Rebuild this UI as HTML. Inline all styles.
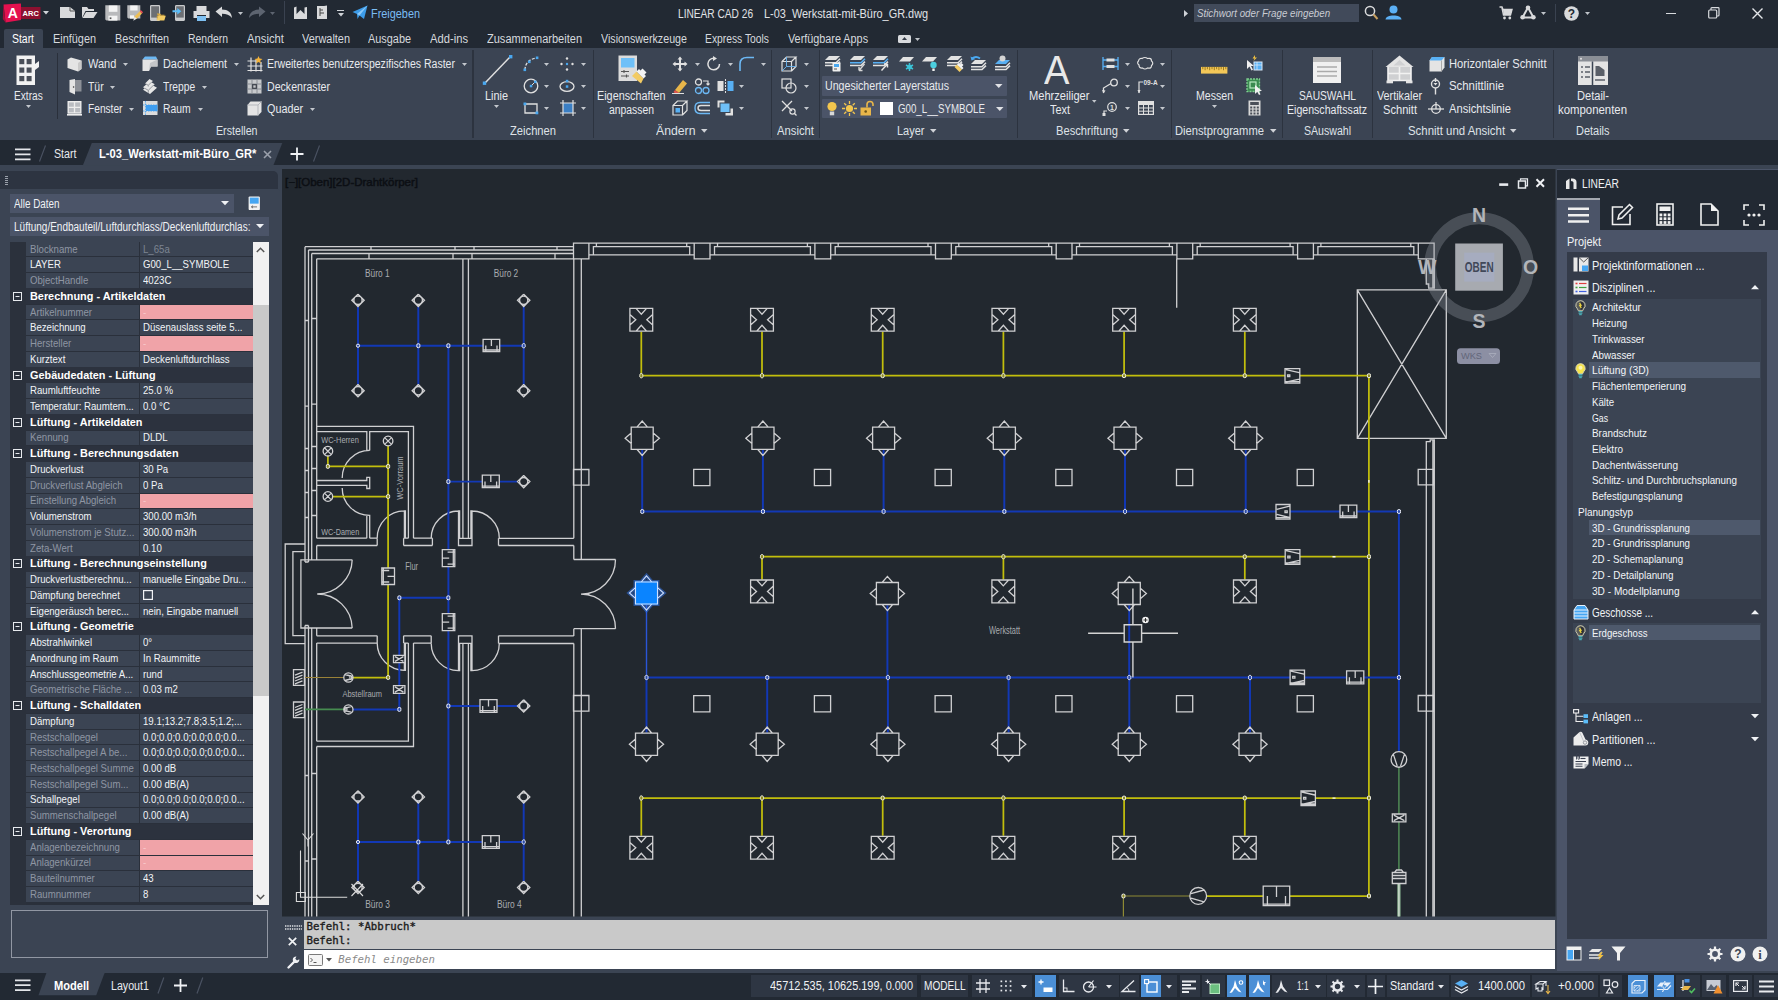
<!DOCTYPE html>
<html lang="de"><head><meta charset="utf-8"><title>LINEAR CAD 26 - L-03_Werkstatt-mit-Büro_GR.dwg</title>
<style>
html,body{margin:0;padding:0;background:#222933;}
body{width:1778px;height:1000px;overflow:hidden;position:relative;font-family:"Liberation Sans",sans-serif;font-size:12px;color:#e6e8ec;}
.a{position:absolute;}
.t{position:absolute;white-space:nowrap;transform-origin:0 50%;line-height:16px;height:16px;}
.b{font-weight:bold;}
svg{position:absolute;overflow:visible;}
</style></head><body>
<div class="a" style="left:0px;top:140px;width:1778px;height:25px;background:#222933;"></div><div class="a" style="left:0px;top:164.5px;width:1778px;height:808px;background:#3b4453;"></div><div class="a" style="left:0px;top:0px;width:1778px;height:26px;background:#222933;"></div><svg style="left:2px;top:3px" width="40" height="20" viewBox="0 0 40 20"><path d="M1.5 1.5L19 0.5V17L3.5 19.5Z" fill="#e3114f"/><path d="M1.5 1.5L3.5 19.5L0.8 16Z" fill="#a50d3a"/><rect x="19" y="4" width="19.5" height="12" fill="#8c1030"/><text x="10.8" y="15" font-family="Liberation Sans,sans-serif" font-weight="bold" font-size="14" fill="#fff" text-anchor="middle">A</text><text x="28.7" y="13.2" font-family="Liberation Sans,sans-serif" font-weight="bold" font-size="7.5" fill="#fff" text-anchor="middle">ARC</text></svg><svg style="left:43px;top:11.25px" width="6" height="3.5"><path d="M0 0H6L3 3.5Z" fill="#d0d3d8"/></svg><svg style="left:60px;top:6px" width="16" height="13" viewBox="0 0 16 13"><path d="M0 1H10L15 5V12H0Z" fill="#d9dadc"/><path d="M10 1V5H15" fill="none" stroke="#555" stroke-width="1"/></svg><svg style="left:82px;top:6px" width="16" height="13" viewBox="0 0 16 13"><path d="M0 1H5L6.5 3H12V5H3.5L0 12Z" fill="#d9dadc"/><path d="M4 6H15.5L11.5 12H0.5Z" fill="#d9dadc"/></svg><svg style="left:104.5px;top:5px" width="16" height="16" viewBox="0 0 16 16"><path d="M0.300 0.300H15.300V15.600H1.500L0.300 14.400Z" fill="#b9babc"/><rect x="3.800" y="0.500" width="8.600" height="6.300" fill="#f4f4f4"/><rect x="3.400" y="10.700" width="9" height="4.900" fill="#f4f4f4"/><rect x="4.700" y="12.400" width="1.700" height="1.700" fill="#555"/></svg><svg style="left:127px;top:5px" width="16" height="16" viewBox="0 0 16 16"><path d="M0.300 0.300H13.300V13.600H1.300L0.300 12.600Z" fill="#b9babc"/><rect x="3.200" y="0.500" width="7.400" height="5" fill="#f4f4f4"/><rect x="3" y="10.300" width="4" height="3.300" fill="#f4f4f4"/><path d="M6.800 14.300L7.600 11.600L12.800 6.200L15 8.400L9.700 13.700Z" fill="#eebf55"/><path d="M12.800 6.200L13.800 5.100L16 7.300L15 8.400Z" fill="#f0505a"/><path d="M6.300 15.800L7.600 11.600L9.700 13.700Z" fill="#e8e8e8"/></svg><svg style="left:149.5px;top:5px" width="16" height="16" viewBox="0 0 16 16"><rect x="0.600" y="0.600" width="9" height="14.800" rx="0.800" fill="#6c6f74" stroke="#c9cacc" stroke-width="1.200"/><rect x="0.600" y="12.600" width="9" height="2.800" fill="#c9cacc"/><path d="M6.800 8.500H10L11 9.800H14.500V10.800H8Z" fill="#d9a93c"/><path d="M8.300 10.800H15.800L14.300 15.500H6.800Z" fill="#f3cb63"/><path d="M6.800 8.500V15.500L8.300 10.800H6.800Z" fill="#d9a93c"/></svg><svg style="left:172px;top:5px" width="14" height="16" viewBox="0 0 14 16"><rect x="3.600" y="0.600" width="8.800" height="14.800" rx="0.800" fill="#6c6f74" stroke="#c9cacc" stroke-width="1.200"/><rect x="3.600" y="12.600" width="8.800" height="2.800" fill="#c9cacc"/><path d="M0.500 5.300H5.300V3L9.300 6.300L5.300 9.600V7.300H0.500Z" fill="#5bbcf8"/></svg><svg style="left:193px;top:4.5px" width="17" height="17" viewBox="0 0 17 17"><rect x="3.5" y="1" width="10" height="5" fill="#d9dadc"/><path d="M0.5 6H16.5V13H13V10H4V13H0.5Z" fill="#d9dadc"/><rect x="4" y="11" width="9" height="5" fill="#7ec0f2"/></svg><svg style="left:215px;top:6px" width="18" height="13" viewBox="0 0 18 13"><path d="M0.5 5.5L7 0.5V3.6C13 3.6 16.5 6.5 17 12C14.5 8.8 11.5 7.8 7 7.8V11Z" fill="#d9dadc"/></svg><svg style="left:237.5px;top:11.5px" width="5" height="3"><path d="M0 0H5L2.5 3Z" fill="#c0c4ca"/></svg><svg style="left:248px;top:6px" width="18" height="13" viewBox="0 0 18 13"><path d="M17.5 5.5L11 0.5V3.6C5 3.6 1.5 6.5 1 12C3.5 8.8 6.5 7.8 11 7.8V11Z" fill="#5d6470"/></svg><svg style="left:270px;top:11.5px" width="5" height="3"><path d="M0 0H5L2.5 3Z" fill="#5d6470"/></svg><div class="a" style="left:283.5px;top:1px;width:1px;height:23px;background:#3a4250;"></div><svg style="left:293px;top:6px" width="15" height="14" viewBox="0 0 15 14"><path d="M1 1.5L3.5 0.5V8L7.5 4L11.5 8V1.5L14 1V13H1Z" fill="#d9dadc"/></svg><svg style="left:316px;top:5px" width="12" height="15" viewBox="0 0 12 15"><path d="M1 1H8L11 0.5V14H1Z" fill="#d9dadc"/><path d="M4 3V11M4 5H7M4 8H8" stroke="#444" stroke-width="1" fill="none"/></svg><div class="a" style="left:337px;top:10px;width:7px;height:1.2px;background:#d0d3d8;"></div><svg style="left:337.5px;top:12.75px" width="6" height="3.5"><path d="M0 0H6L3 3.5Z" fill="#d0d3d8"/></svg><svg style="left:352px;top:5px" width="16" height="15" viewBox="0 0 16 15"><path d="M0.5 7L15.5 0.5L12 14L7.5 10.5L5.5 14L5 9Z" fill="#3c9be8"/><path d="M5 9L15.5 0.5L7.5 10.5" fill="#8cc8f8"/></svg><span class="t" style="left:371.0px;top:6px;font-size:12px;transform:scaleX(0.907);color:#7bbcf3;">Freigeben</span><span class="t" style="left:678.0px;top:6px;font-size:12px;transform:scaleX(0.846);color:#e0e2e6;">LINEAR CAD 26</span><span class="t" style="left:764.0px;top:6px;font-size:12px;transform:scaleX(0.909);color:#e0e2e6;">L-03_Werkstatt-mit-Büro_GR.dwg</span><svg style="left:1184px;top:9.5px" width="4" height="7"><path d="M0 0L4 3.5L0 7Z" fill="#d0d3d8"/></svg><div class="a" style="left:1194px;top:4px;width:165px;height:18px;background:#414a5a;"></div><span class="t" style="left:1197.0px;top:5px;font-size:11.5px;transform:scaleX(0.846);color:#c9ccd3;font-style:italic;">Stichwort oder Frage eingeben</span><svg style="left:1364px;top:5px" width="15" height="15" viewBox="0 0 15 15"><circle cx="6" cy="6" r="4.6" fill="none" stroke="#d9dadc" stroke-width="1.5"/><path d="M9.5 9.5L13.5 14" stroke="#c8a060" stroke-width="2"/></svg><svg style="left:1385px;top:5px" width="17" height="15" viewBox="0 0 17 15"><circle cx="8.5" cy="4.5" r="4" fill="#5cb0f5"/><path d="M0.5 14.5C0.5 9 16.5 9 16.5 14.5Z" fill="#5cb0f5"/></svg><svg style="left:1499px;top:6px" width="14" height="14" viewBox="0 0 14 14"><path d="M0.5 1H3L4 3.5H13L11.5 9H4.5L3 1.8" fill="none" stroke="#d9dadc" stroke-width="1.4"/><path d="M4 3.5H13L11.5 9H4.5Z" fill="#d9dadc"/><circle cx="5.5" cy="12" r="1.4" fill="#d9dadc"/><circle cx="10.8" cy="12" r="1.4" fill="#d9dadc"/></svg><svg style="left:1520px;top:5px" width="16" height="15" viewBox="0 0 16 15"><path d="M8 2.5L2.5 12.5H13.5Z" fill="none" stroke="#d9dadc" stroke-width="2"/><circle cx="8" cy="2.8" r="2.3" fill="#d9dadc"/><circle cx="2.6" cy="12.2" r="2.3" fill="#d9dadc"/><circle cx="13.4" cy="12.2" r="2.3" fill="#d9dadc"/></svg><svg style="left:1540.5px;top:12px" width="5" height="3"><path d="M0 0H5L2.5 3Z" fill="#c0c4ca"/></svg><div class="a" style="left:1555px;top:4px;width:1px;height:18px;background:#3a4250;"></div><svg style="left:1563.5px;top:5.5px" width="15" height="15" viewBox="0 0 15 15"><circle cx="7.5" cy="7.5" r="7.3" fill="#d9dadc"/><text x="7.5" y="11.8" font-family="Liberation Sans,sans-serif" font-weight="bold" font-size="12" fill="#222933" text-anchor="middle">?</text></svg><svg style="left:1585px;top:12px" width="5" height="3"><path d="M0 0H5L2.5 3Z" fill="#c0c4ca"/></svg><div class="a" style="left:1666px;top:12.5px;width:10px;height:1.2px;background:#d8dade;"></div><svg style="left:1708px;top:7px" width="12" height="12" viewBox="0 0 12 12"><rect x="0.7" y="3" width="8" height="8" fill="none" stroke="#d8dade" stroke-width="1.2" rx="1"/><path d="M3 3V1.5Q3 .7 3.8 .7H10.3Q11 .7 11 1.5V8Q11 9 10 9H9" fill="none" stroke="#d8dade" stroke-width="1.2"/></svg><svg style="left:1751.5px;top:7.5px" width="11" height="11" viewBox="0 0 11 11"><path d="M0.5 0.5L10.5 10.5M10.5 0.5L0.5 10.5" stroke="#e4e6ea" stroke-width="1.4"/></svg><div class="a" style="left:4px;top:29px;width:38.5px;height:19px;background:#3b4453;border-radius:2px 2px 0 0;"></div><span class="t" style="left:12.0px;top:31px;font-size:12px;transform:scaleX(0.869);color:#ffffff;">Start</span><span class="t" style="left:53.0px;top:31px;font-size:12px;transform:scaleX(0.908);color:#d6d9de;">Einfügen</span><span class="t" style="left:115.0px;top:31px;font-size:12px;transform:scaleX(0.900);color:#d6d9de;">Beschriften</span><span class="t" style="left:188.0px;top:31px;font-size:12px;transform:scaleX(0.869);color:#d6d9de;">Rendern</span><span class="t" style="left:247.0px;top:31px;font-size:12px;transform:scaleX(0.940);color:#d6d9de;">Ansicht</span><span class="t" style="left:302.0px;top:31px;font-size:12px;transform:scaleX(0.911);color:#d6d9de;">Verwalten</span><span class="t" style="left:368.0px;top:31px;font-size:12px;transform:scaleX(0.908);color:#d6d9de;">Ausgabe</span><span class="t" style="left:430.0px;top:31px;font-size:12px;transform:scaleX(0.934);color:#d6d9de;">Add-ins</span><span class="t" style="left:487.0px;top:31px;font-size:12px;transform:scaleX(0.919);color:#d6d9de;">Zusammenarbeiten</span><span class="t" style="left:601.0px;top:31px;font-size:12px;transform:scaleX(0.891);color:#d6d9de;">Visionswerkzeuge</span><span class="t" style="left:705.0px;top:31px;font-size:12px;transform:scaleX(0.859);color:#d6d9de;">Express Tools</span><span class="t" style="left:788.0px;top:31px;font-size:12px;transform:scaleX(0.902);color:#d6d9de;">Verfügbare Apps</span><div class="a" style="left:898px;top:34.5px;width:13px;height:8px;background:#d8dade;border-radius:1.5px;"></div><svg style="left:902px;top:37px" width="5" height="3"><path d="M0 3H5L2.5 0Z" fill="#333a46"/></svg><svg style="left:914.5px;top:38px" width="5" height="3"><path d="M0 0H5L2.5 3Z" fill="#c0c4ca"/></svg><div class="a" style="left:0px;top:48px;width:1778px;height:92px;background:#3b4453;"></div><svg style="left:16px;top:55px" width="24" height="31" viewBox="0 0 24 31"><path d="M0.5 0.5H19V30H0.5Z" fill="#f2f2f2"/><path d="M19 9L23 6V12L19 15Z" fill="#f2f2f2"/><rect x="3.3" y="4" width="5" height="5.2" fill="#4a4f58"/><rect x="10.6" y="4" width="5" height="5.2" fill="#4a4f58"/><rect x="3.3" y="12.5" width="5" height="5.2" fill="#4a4f58"/><rect x="10.6" y="12.5" width="5" height="5.2" fill="#4a4f58"/><rect x="3.3" y="21" width="5" height="5.2" fill="#4a4f58"/><rect x="10.6" y="21" width="5" height="5.2" fill="#4a4f58"/></svg><span class="t" style="left:14.2px;top:88px;font-size:12px;transform:scaleX(0.844);color:#e8eaee;">Extras</span><svg style="left:25.7px;top:105px" width="5" height="3"><path d="M0 0H5L2.5 3Z" fill="#c4c8ce"/></svg><div class="a" style="left:57.3px;top:53px;width:1.2px;height:66px;background:#2a303b;"></div><svg style="left:67px;top:56.5px" width="15" height="15" viewBox="0 0 15 15"><path d="M0.5 2.5L4 0.5L14.5 3.5V12L11 14.5L0.5 11Z" fill="#e4e4e4"/><path d="M11 6V14.5L14.5 12V3.5Z" fill="#c9c9c9"/></svg><span class="t" style="left:87.5px;top:56px;font-size:12px;transform:scaleX(0.916);color:#e8eaee;">Wand</span><svg style="left:123px;top:62.8px" width="5" height="3"><path d="M0 0H5L2.5 3Z" fill="#c4c8ce"/></svg><svg style="left:68.5px;top:78.5px" width="13" height="16" viewBox="0 0 13 16"><path d="M0.5 1L6 0V15.5L0.5 13Z" fill="#e4e4e4"/><rect x="6" y="1" width="6.5" height="11.5" fill="#8c9097"/><circle cx="4.6" cy="8" r="0.8" fill="#333"/></svg><span class="t" style="left:87.7px;top:79px;font-size:12px;transform:scaleX(0.867);color:#e8eaee;">Tür</span><svg style="left:109.8px;top:85.5px" width="5" height="3"><path d="M0 0H5L2.5 3Z" fill="#c4c8ce"/></svg><svg style="left:67px;top:100.5px" width="15" height="15" viewBox="0 0 15 15"><rect x="1.2" y="0.7" width="12.6" height="11.3" fill="#b9bcc1" stroke="#ededed" stroke-width="1.4"/><path d="M7.5 0.7V12M1.2 6.3H13.8" stroke="#ededed" stroke-width="1.3"/><rect x="0" y="13" width="15" height="1.6" fill="#ededed"/></svg><span class="t" style="left:87.7px;top:101px;font-size:12px;transform:scaleX(0.848);color:#e8eaee;">Fenster</span><svg style="left:129.4px;top:107.6px" width="5" height="3"><path d="M0 0H5L2.5 3Z" fill="#c4c8ce"/></svg><svg style="left:142px;top:56px" width="16" height="16" viewBox="0 0 16 16"><path d="M0.5 3.5L3 0.5H14L15.5 3.5Z" fill="#6cb8f4"/><path d="M0.5 3.5H15.5V10.5H9L7 15H0.5Z" fill="#e4e4e4"/><path d="M8 7L15.5 3.5V10.5H9L7 15Z" fill="#c4c6c9"/></svg><span class="t" style="left:162.7px;top:56px;font-size:12px;transform:scaleX(0.907);color:#e8eaee;">Dachelement</span><svg style="left:234px;top:62.8px" width="5" height="3"><path d="M0 0H5L2.5 3Z" fill="#c4c8ce"/></svg><svg style="left:142px;top:78px" width="16" height="17" viewBox="0 0 16 17"><path d="M7.500 1L11 3L9.300 4.300L12.800 6.300L11.100 7.600L15 9.800L8 16L1 11.800L2.800 10.300L1 9.200L4.500 6.300L3 5.400Z" fill="#e6e6e6"/><path d="M3 5.400L6.300 7.300L9.300 4.300M2.800 10.300L6.300 12.300L11.100 7.600M6.300 7.300V8.500M6.300 12.300V14.800" stroke="#8a8e95" stroke-width="0.900" fill="none"/></svg><span class="t" style="left:162.7px;top:79px;font-size:12px;transform:scaleX(0.854);color:#e8eaee;">Treppe</span><svg style="left:201.7px;top:85.5px" width="5" height="3"><path d="M0 0H5L2.5 3Z" fill="#c4c8ce"/></svg><svg style="left:142.5px;top:101px" width="14.5" height="14" viewBox="0 0 14.5 14"><rect x="0" y="0" width="14.5" height="14" fill="#dcdcdc"/><rect x="3" y="4" width="11.5" height="6" fill="#3f9ef0"/><path d="M2.5 0V14M0 4H14.5M0 10H14.5" stroke="#3f9ef0" stroke-width="0.8" stroke-dasharray="1.5 1"/></svg><span class="t" style="left:162.7px;top:101px;font-size:12px;transform:scaleX(0.862);color:#e8eaee;">Raum</span><svg style="left:198px;top:107.6px" width="5" height="3"><path d="M0 0H5L2.5 3Z" fill="#c4c8ce"/></svg><svg style="left:246.5px;top:56px" width="16" height="16" viewBox="0 0 16 16"><path d="M4 1.5V15.5M9 4V15.5M14 6V15.5M0.5 5H10M0.5 10H15.5M0.5 14.5H15.5" stroke="#e4e4e4" stroke-width="1.2" fill="none"/><path d="M11.5 0L12.6 2.6L15.5 3L13.2 4.8L14 7.6L11.5 6L9 7.6L9.8 4.8L7.5 3L10.4 2.6Z" fill="#f2b33c"/></svg><span class="t" style="left:267.0px;top:56px;font-size:12px;transform:scaleX(0.878);color:#e8eaee;">Erweitertes benutzerspezifisches Raster</span><svg style="left:462px;top:62.8px" width="5" height="3"><path d="M0 0H5L2.5 3Z" fill="#c4c8ce"/></svg><svg style="left:247px;top:79px" width="15" height="15" viewBox="0 0 15 15"><rect x="0.5" y="0.5" width="14" height="14" fill="#c7c9cc"/><path d="M5 0.5V14.5M10 0.5V14.5M0.5 5H14.5M0.5 10H14.5" stroke="#8a8e95" stroke-width="1"/><rect x="5.7" y="5.7" width="3.6" height="3.6" fill="none" stroke="#3a3f48" stroke-width="1.2"/></svg><span class="t" style="left:267.0px;top:79px;font-size:12px;transform:scaleX(0.883);color:#e8eaee;">Deckenraster</span><svg style="left:247px;top:101px" width="15" height="15" viewBox="0 0 15 15"><path d="M0.5 4L3.5 0.5H14.5V11L11 14.5H0.5Z" fill="#e4e4e4"/><path d="M11 4H0.5M11 4V14.5M11 4L14.5 0.5" stroke="#b4b7bc" stroke-width="1" fill="none"/></svg><span class="t" style="left:267.0px;top:101px;font-size:12px;transform:scaleX(0.900);color:#e8eaee;">Quader</span><svg style="left:310px;top:107.6px" width="5" height="3"><path d="M0 0H5L2.5 3Z" fill="#c4c8ce"/></svg><span class="t" style="left:216.2px;top:123px;font-size:12px;transform:scaleX(0.889);color:#dfe2e7;">Erstellen</span><div class="a" style="left:472px;top:50px;width:1.5px;height:88px;background:#2c333f;"></div><svg style="left:482px;top:54px" width="32" height="32" viewBox="0 0 32 32"><path d="M3 29L28 3" stroke="#e0e0e0" stroke-width="1.5"/><rect x="0.8" y="27.5" width="3.4" height="3.4" fill="#4aa8f0"/><rect x="27" y="1" width="3.4" height="3.4" fill="#4aa8f0"/></svg><span class="t" style="left:485.2px;top:88px;font-size:12px;transform:scaleX(0.907);color:#e8eaee;">Linie</span><svg style="left:494px;top:105px" width="5" height="3"><path d="M0 0H5L2.5 3Z" fill="#c4c8ce"/></svg><svg style="left:523px;top:56px" width="16" height="15" viewBox="0 0 16 15"><path d="M2 14C2 7 7 2.5 14 2" fill="none" stroke="#e0e0e0" stroke-width="1.3" stroke-dasharray="3 1.5"/><rect x="0.5" y="12.5" width="2.6" height="2.6" fill="#4aa8f0"/><rect x="12.8" y="0.5" width="2.6" height="2.6" fill="#4aa8f0"/><rect x="5" y="4.5" width="2.6" height="2.6" fill="#4aa8f0"/></svg><svg style="left:544.3px;top:62.8px" width="5" height="3"><path d="M0 0H5L2.5 3Z" fill="#c4c8ce"/></svg><svg style="left:560px;top:57px" width="14" height="14" viewBox="0 0 14 14"><circle cx="7" cy="1.5" r="1.2" fill="#e0e0e0"/><circle cx="7" cy="12.5" r="1.2" fill="#e0e0e0"/><circle cx="1.5" cy="7" r="1.2" fill="#e0e0e0"/><circle cx="12.5" cy="7" r="1.2" fill="#e0e0e0"/><circle cx="7" cy="7" r="1.2" fill="#4aa8f0"/></svg><svg style="left:581.3px;top:62.8px" width="5" height="3"><path d="M0 0H5L2.5 3Z" fill="#c4c8ce"/></svg><svg style="left:522.5px;top:78px" width="16" height="16" viewBox="0 0 16 16"><circle cx="8" cy="8" r="6.8" fill="none" stroke="#e0e0e0" stroke-width="1.3"/><path d="M8 8L12 4" stroke="#e0e0e0" stroke-width="1"/><rect x="6.8" y="6.8" width="2.5" height="2.5" fill="#4aa8f0"/><rect x="11" y="2.6" width="2.5" height="2.5" fill="#4aa8f0"/></svg><svg style="left:544.3px;top:85px" width="5" height="3"><path d="M0 0H5L2.5 3Z" fill="#c4c8ce"/></svg><svg style="left:559px;top:79px" width="16" height="14" viewBox="0 0 16 14"><ellipse cx="8" cy="7.5" rx="7" ry="4.8" fill="none" stroke="#e0e0e0" stroke-width="1.3"/><rect x="6.8" y="6.3" width="2.5" height="2.5" fill="#4aa8f0"/><rect x="6.8" y="0.8" width="2.5" height="2.5" fill="#4aa8f0"/></svg><svg style="left:581.3px;top:85px" width="5" height="3"><path d="M0 0H5L2.5 3Z" fill="#c4c8ce"/></svg><svg style="left:523px;top:101px" width="16" height="14" viewBox="0 0 16 14"><path d="M2 3H14V12H2Z" fill="none" stroke="#e0e0e0" stroke-width="1.3"/><rect x="0.5" y="1.5" width="2.8" height="2.8" fill="#4aa8f0"/><rect x="12.5" y="10.5" width="2.8" height="2.8" fill="#4aa8f0"/></svg><svg style="left:544.3px;top:107.3px" width="5" height="3"><path d="M0 0H5L2.5 3Z" fill="#c4c8ce"/></svg><svg style="left:559.5px;top:100px" width="16" height="16" viewBox="0 0 16 16"><rect x="3" y="3" width="10" height="10" fill="#3b7fc4"/><path d="M3 0V16M13 0V16M0 3H16M0 13H16" stroke="#e0e0e0" stroke-width="1.2"/></svg><svg style="left:581.3px;top:107.3px" width="5" height="3"><path d="M0 0H5L2.5 3Z" fill="#c4c8ce"/></svg><span class="t" style="left:510.0px;top:123px;font-size:12px;transform:scaleX(0.932);color:#dfe2e7;">Zeichnen</span><div class="a" style="left:592.5px;top:50px;width:1.5px;height:88px;background:#2c333f;"></div><svg style="left:617px;top:55px" width="32" height="32" viewBox="0 0 32 32"><rect x="1.500" y="0.500" width="18.500" height="25.500" fill="#dcdcdc"/><rect x="4" y="3" width="13.500" height="9.500" fill="#6ec0f8"/><path d="M4 16.500H12M4 21H12M7 15V18M9.500 19.500V22.500" stroke="#555" stroke-width="1.100"/><path d="M15 21L19.500 16.500L26.500 23.500L24 28.500Z" fill="#f3cb63"/><path d="M19.500 16.500L22 14L23.500 15.500L25.500 13.500L29.500 17.500L27.500 19.500L29 21L26.500 23.500Z" fill="#f4f4f4"/></svg><span class="t" style="left:597.2px;top:88px;font-size:12px;transform:scaleX(0.901);color:#e8eaee;">Eigenschaften</span><span class="t" style="left:609.0px;top:102px;font-size:12px;transform:scaleX(0.865);color:#e8eaee;">anpassen</span><svg style="left:672px;top:56px" width="16" height="16" viewBox="0 0 16 16"><path d="M8 0.5L10.5 3.5H9V7H12.5V5.5L15.5 8L12.5 10.5V9H9V12.5H10.5L8 15.5L5.5 12.5H7V9H3.5V10.5L0.5 8L3.5 5.5V7H7V3.5H5.5Z" fill="#e0e0e0"/></svg><svg style="left:694.5px;top:62.8px" width="5" height="3"><path d="M0 0H5L2.5 3Z" fill="#c4c8ce"/></svg><svg style="left:706px;top:56px" width="16" height="16" viewBox="0 0 16 16"><path d="M13.5 8A5.8 5.8 0 1 1 8 2.2" fill="none" stroke="#e0e0e0" stroke-width="1.5"/><path d="M7 0L11 2.5L7 5Z" fill="#e0e0e0"/></svg><svg style="left:728px;top:62.8px" width="5" height="3"><path d="M0 0H5L2.5 3Z" fill="#c4c8ce"/></svg><svg style="left:739px;top:56px" width="16" height="16" viewBox="0 0 16 16"><path d="M1 15V8Q1 1.5 8 1.5H15" fill="none" stroke="#6cb8f4" stroke-width="1.6"/></svg><svg style="left:761px;top:62.8px" width="5" height="3"><path d="M0 0H5L2.5 3Z" fill="#c4c8ce"/></svg><svg style="left:672px;top:78px" width="17" height="16" viewBox="0 0 17 16"><path d="M3 12L11 2L15 5.5L7 15Z" fill="#e8b64a"/><path d="M3 12L7 15L4 16L1.5 14Z" fill="#e2574c"/><path d="M0 15.5H12" stroke="#e0e0e0" stroke-width="1"/></svg><svg style="left:694px;top:78px" width="17" height="17" viewBox="0 0 17 17"><circle cx="4.5" cy="4" r="3" fill="none" stroke="#e0e0e0" stroke-width="1.3"/><circle cx="4.5" cy="12.5" r="3" fill="none" stroke="#6cb8f4" stroke-width="1.3"/><circle cx="12" cy="12.5" r="3" fill="none" stroke="#6cb8f4" stroke-width="1.3"/><path d="M9 3H14V7M12.5 5.5L14 7L15.5 5.5" fill="none" stroke="#e0e0e0" stroke-width="1.2"/></svg><svg style="left:717px;top:79px" width="17" height="14" viewBox="0 0 17 14"><rect x="0.5" y="2" width="6" height="10" fill="#e0e0e0"/><path d="M8.5 0V14" stroke="#e0e0e0" stroke-width="1" stroke-dasharray="2 1"/><rect x="10.5" y="2" width="6" height="10" fill="#58b0f4"/></svg><svg style="left:739px;top:85px" width="5" height="3"><path d="M0 0H5L2.5 3Z" fill="#c4c8ce"/></svg><svg style="left:672px;top:100px" width="17" height="16" viewBox="0 0 17 16"><path d="M1 5.5H10.5V15H1ZM1 5.5L5.5 1H15L10.5 5.5M15 1V10.5L10.5 15" fill="none" stroke="#e0e0e0" stroke-width="1.2"/><rect x="3.5" y="8" width="4.5" height="4.5" fill="#58b0f4"/></svg><svg style="left:694px;top:101px" width="17" height="14" viewBox="0 0 17 14"><path d="M16 1.5H6Q1 1.5 1 7Q1 12.5 6 12.5H16" fill="none" stroke="#6cb8f4" stroke-width="1.4"/><path d="M16 4.5H7Q4 4.5 4 7Q4 9.5 7 9.5H16" fill="none" stroke="#e0e0e0" stroke-width="1.4"/></svg><svg style="left:717px;top:100px" width="17" height="16" viewBox="0 0 17 16"><rect x="0.5" y="0.5" width="7" height="7" fill="#e0e0e0"/><rect x="8.5" y="8.5" width="7.5" height="7" fill="#e0e0e0"/><rect x="3" y="3" width="10" height="9.5" fill="#6ec0f8" stroke="#3b4453" stroke-width="1"/></svg><svg style="left:739px;top:107.3px" width="5" height="3"><path d="M0 0H5L2.5 3Z" fill="#c4c8ce"/></svg><span class="t" style="left:655.8px;top:123px;font-size:12px;transform:scaleX(1.021);color:#dfe2e7;">Ändern</span><svg style="left:701px;top:128.6px" width="6.5" height="3.8"><path d="M0 0H6.5L3.25 3.8Z" fill="#d0d3d8"/></svg><div class="a" style="left:770.5px;top:50px;width:1.5px;height:88px;background:#2c333f;"></div><svg style="left:781px;top:56px" width="16" height="16" viewBox="0 0 16 16"><path d="M1 5.5H10.5V15H1ZM1 5.5L5.5 1H15L10.5 5.5M15 1V10.5L10.5 15" fill="none" stroke="#e0e0e0" stroke-width="1.2"/><path d="M5.5 1V10.5H15M5.5 10.5L1 15" stroke="#6cb8f4" stroke-width="0.9" fill="none"/></svg><svg style="left:803.5px;top:62.8px" width="5" height="3"><path d="M0 0H5L2.5 3Z" fill="#c4c8ce"/></svg><svg style="left:781px;top:78px" width="16" height="16" viewBox="0 0 16 16"><rect x="1" y="1" width="9" height="9" fill="none" stroke="#e0e0e0" stroke-width="1.2"/><circle cx="10" cy="10" r="5" fill="none" stroke="#e0e0e0" stroke-width="1.2"/></svg><svg style="left:803.5px;top:85px" width="5" height="3"><path d="M0 0H5L2.5 3Z" fill="#c4c8ce"/></svg><svg style="left:781px;top:100px" width="16" height="16" viewBox="0 0 16 16"><path d="M1 1L11 11M11 1L1 11" stroke="#e0e0e0" stroke-width="1.3"/><circle cx="11.5" cy="11.5" r="2.6" fill="none" stroke="#e0e0e0" stroke-width="1.2"/><path d="M13.5 13.5L15.5 15.5" stroke="#e0e0e0" stroke-width="1.3"/></svg><svg style="left:803.5px;top:107.3px" width="5" height="3"><path d="M0 0H5L2.5 3Z" fill="#c4c8ce"/></svg><span class="t" style="left:776.8px;top:123px;font-size:12px;transform:scaleX(0.940);color:#dfe2e7;">Ansicht</span><div class="a" style="left:818.5px;top:50px;width:1.5px;height:88px;background:#2c333f;"></div><svg style="left:824px;top:55px" width="18" height="18" viewBox="0 0 18 18"><path d="M5 1 H16 L12 5 H1 Z" fill="#e2e2e2"/><path d="M1 7.8 H12 L16 3.8" fill="none" stroke="#e2e2e2" stroke-width="1.500"/><path d="M1 10.6 H12 L16 6.6" fill="none" stroke="#e2e2e2" stroke-width="1.500"/><rect x="8.500" y="7.500" width="8" height="9" rx="0.800" fill="#f0f0f0"/><rect x="10" y="9" width="5" height="3" fill="#4aa8f0"/><path d="M10 14H13" stroke="#555" stroke-width="1"/></svg><svg style="left:849px;top:55px" width="18" height="18" viewBox="0 0 18 18"><path d="M5 1 H16 L12 5 H1 Z" fill="#e2e2e2"/><path d="M1 7.8 H12 L16 3.8" fill="none" stroke="#58b0f4" stroke-width="1.500"/><path d="M1 10.6 H12 L16 6.6" fill="none" stroke="#e2e2e2" stroke-width="1.500"/><path d="M15.500 9L10 15.500M10 15.500V12M10 15.500H13.500" stroke="#d8d8d8" stroke-width="1.400" fill="none"/></svg><svg style="left:872px;top:55px" width="18" height="18" viewBox="0 0 18 18"><path d="M5 1 H16 L12 5 H1 Z" fill="#e2e2e2"/><path d="M1 7.8 H12 L16 3.8" fill="none" stroke="#58b0f4" stroke-width="1.500"/><path d="M1 10.6 H12 L16 6.6" fill="none" stroke="#e2e2e2" stroke-width="1.500"/><path d="M9.500 15.500L15.500 9M15.500 9V12.500M15.500 9H12" stroke="#e8e8e8" stroke-width="1.400" fill="none"/></svg><svg style="left:898px;top:55px" width="18" height="18" viewBox="0 0 18 18"><path d="M5 2H16L12 6.500H1Z" fill="#e2e2e2"/><path d="M11.500 8V16M8 10L15 14M15 10L8 14" stroke="#3cc4d8" stroke-width="1.500"/><circle cx="11.500" cy="12" r="2" fill="none" stroke="#3cc4d8" stroke-width="1"/></svg><svg style="left:922px;top:55px" width="18" height="18" viewBox="0 0 18 18"><path d="M4 2H15L11 6.500H0Z" fill="#e2e2e2"/><circle cx="11.500" cy="10" r="3.200" fill="#4ccfe0"/><rect x="10.300" y="13.500" width="2.400" height="2.500" fill="#f0f0f0"/></svg><svg style="left:946px;top:55px" width="18" height="18" viewBox="0 0 18 18"><path d="M5 1 H16 L12 5 H1 Z" fill="#e2e2e2"/><path d="M1 7.8 H12 L16 3.8" fill="none" stroke="#e2e2e2" stroke-width="1.500"/><path d="M1 10.6 H12 L16 6.6" fill="none" stroke="#e2e2e2" stroke-width="1.500"/><path d="M8.500 12L11 9.500L16 14.500L13.500 17Z" fill="#f3cb63"/><path d="M11 9.500L12.500 8L14 9.500L15.500 8L17.500 10L16 11.500L17.500 13L16 14.500Z" fill="#f4f4f4"/></svg><svg style="left:970px;top:55px" width="18" height="18" viewBox="0 0 18 18"><path d="M5 5 H16 L12 9 H1 Z" fill="#e2e2e2"/><path d="M1 11.8 H12 L16 7.8" fill="none" stroke="#e2e2e2" stroke-width="1.500"/><path d="M1 14.6 H12 L16 10.6" fill="none" stroke="#e2e2e2" stroke-width="1.500"/><path d="M2 3.500Q6 0.500 10 3.500" fill="none" stroke="#4aa8f0" stroke-width="1.800"/><path d="M0.500 1.500L1.500 5.500L5.500 4Z" fill="#4aa8f0"/></svg><svg style="left:994px;top:55px" width="18" height="18" viewBox="0 0 18 18"><path d="M5 5 H16 L12 9 H1 Z" fill="#58b0f4"/><path d="M1 11.8 H12 L16 7.8" fill="none" stroke="#e2e2e2" stroke-width="1.500"/><path d="M1 14.6 H12 L16 10.6" fill="none" stroke="#e2e2e2" stroke-width="1.500"/><circle cx="8.500" cy="3.500" r="3" fill="#d4d4d4"/></svg><div class="a" style="left:822px;top:76px;width:185px;height:19.5px;background:#4b5468;border-radius:1px;"></div><span class="t" style="left:825.0px;top:78px;font-size:12px;transform:scaleX(0.885);color:#e8eaee;">Ungesicherter Layerstatus</span><svg style="left:995.25px;top:83.8px" width="7.5" height="4"><path d="M0 0H7.5L3.75 4Z" fill="#e0e2e6"/></svg><div class="a" style="left:822px;top:98.5px;width:185px;height:19.5px;background:#4b5468;border-radius:1px;"></div><svg style="left:826px;top:100.5px" width="12" height="16" viewBox="0 0 12 16"><circle cx="6" cy="5.5" r="4.6" fill="#f3c64e"/><rect x="3.8" y="10.5" width="4.4" height="3.8" fill="#d8d8d8"/></svg><svg style="left:842px;top:101px" width="15" height="15" viewBox="0 0 15 15"><circle cx="7.5" cy="7.5" r="3.6" fill="#f3c64e"/><path d="M7.5 0V3M7.5 12V15M0 7.5H3M12 7.5H15M2.2 2.2L4.3 4.3M10.7 10.7L12.8 12.8M2.2 12.8L4.3 10.7M10.7 4.3L12.8 2.2" stroke="#f3c64e" stroke-width="1.3"/></svg><svg style="left:860px;top:100px" width="14" height="16" viewBox="0 0 14 16"><rect x="0.5" y="7.5" width="10.5" height="8" fill="#e8b64a"/><path d="M7 7.5V4.5Q7 1.5 10 1.5Q13 1.5 13 4.5V6" fill="none" stroke="#e8b64a" stroke-width="1.6"/><circle cx="5.7" cy="11.5" r="1.3" fill="#6b5318"/></svg><div class="a" style="left:879.5px;top:101.5px;width:13px;height:13px;background:#ffffff;"></div><span class="t" style="left:897.5px;top:101px;font-size:12px;transform:scaleX(0.810);color:#e8eaee;">G00_L__SYMBOLE</span><svg style="left:996.25px;top:106.5px" width="7.5" height="4"><path d="M0 0H7.5L3.75 4Z" fill="#e0e2e6"/></svg><span class="t" style="left:896.8px;top:123px;font-size:12px;transform:scaleX(0.916);color:#dfe2e7;">Layer</span><svg style="left:930px;top:128.6px" width="6.5" height="3.8"><path d="M0 0H6.5L3.25 3.8Z" fill="#d0d3d8"/></svg><div class="a" style="left:1016.5px;top:50px;width:1.5px;height:88px;background:#2c333f;"></div><span class="t" style="left:1044px;top:48px;height:44px;line-height:44px;font-size:41px;color:#e8e8e8;transform:scaleX(.93)">A</span><span class="t" style="left:1029.2px;top:88px;font-size:12px;transform:scaleX(0.925);color:#e8eaee;">Mehrzeiliger</span><span class="t" style="left:1049.5px;top:102px;font-size:12px;transform:scaleX(0.909);color:#e8eaee;">Text</span><svg style="left:1091.75px;top:100.1px" width="4.5" height="2.8"><path d="M0 0H4.5L2.25 2.8Z" fill="#c4c8ce"/></svg><svg style="left:1102px;top:56px" width="17" height="15" viewBox="0 0 17 15"><path d="M1 1V14M16 1V14M1 4H16M1 10.5H16" stroke="#58b0f4" stroke-width="1.3" fill="none"/><path d="M4.5 2.5H12.5V5.5H4.5ZM4.500 9H12.5V12H4.5Z" fill="#e0e0e0"/></svg><svg style="left:1125px;top:62.8px" width="5" height="3"><path d="M0 0H5L2.5 3Z" fill="#c4c8ce"/></svg><svg style="left:1137px;top:57px" width="17" height="13" viewBox="0 0 17 13"><path d="M5 1.5Q2 1 1.5 4Q-0.500 6 2 8Q2 11.500 5.500 11Q8 13 10.500 11Q14.500 12 14.500 8.500Q17 6 14.500 4Q14.500 0.500 10.500 1.500Q8 -0.500 5 1.500Z" fill="none" stroke="#e0e0e0" stroke-width="1.2"/></svg><svg style="left:1160px;top:62.8px" width="5" height="3"><path d="M0 0H5L2.5 3Z" fill="#c4c8ce"/></svg><svg style="left:1102px;top:78px" width="17" height="16" viewBox="0 0 17 16"><path d="M1.5 15V10L9 5.500" fill="none" stroke="#e0e0e0" stroke-width="1.3"/><path d="M0 12L1.5 15.5L3.5 12.500Z" fill="#e0e0e0"/><circle cx="12" cy="4.500" r="3.3" fill="none" stroke="#e0e0e0" stroke-width="1.3"/></svg><svg style="left:1125px;top:85px" width="5" height="3"><path d="M0 0H5L2.5 3Z" fill="#c4c8ce"/></svg><svg style="left:1137px;top:78px" width="17" height="16" viewBox="0 0 17 16"><path d="M2 15V4H6" fill="none" stroke="#e0e0e0" stroke-width="1.2"/><path d="M0.5 12L2 15.5L3.5 12Z" fill="#e0e0e0"/><text x="6.500" y="7" font-family="Liberation Sans,sans-serif" font-size="6.500" font-weight="bold" fill="#e0e0e0">09-A</text></svg><svg style="left:1160px;top:85px" width="5" height="3"><path d="M0 0H5L2.5 3Z" fill="#c4c8ce"/></svg><svg style="left:1102px;top:100px" width="17" height="16" viewBox="0 0 17 16"><path d="M2 15V11H5" fill="none" stroke="#e0e0e0" stroke-width="1.2"/><circle cx="10" cy="7" r="4.300" fill="none" stroke="#e0e0e0" stroke-width="1.2"/><text x="10" y="9.500" font-family="Liberation Sans,sans-serif" font-size="7" font-weight="bold" fill="#e0e0e0" text-anchor="middle">1</text><rect x="0.5" y="13" width="3" height="3" fill="#e0e0e0"/></svg><svg style="left:1125px;top:107.3px" width="5" height="3"><path d="M0 0H5L2.5 3Z" fill="#c4c8ce"/></svg><svg style="left:1137.5px;top:101px" width="16" height="14" viewBox="0 0 16 14"><rect x="0.600" y="0.600" width="14.800" height="12.800" fill="none" stroke="#e0e0e0" stroke-width="1.200"/><rect x="0.600" y="0.600" width="14.800" height="3.400" fill="#e0e0e0"/><path d="M0.600 7H15.400M0.600 10.200H15.400M5.500 4V13.400M10.500 4V13.400" stroke="#e0e0e0" stroke-width="1"/></svg><svg style="left:1160px;top:107.3px" width="5" height="3"><path d="M0 0H5L2.5 3Z" fill="#c4c8ce"/></svg><span class="t" style="left:1055.5px;top:123px;font-size:12px;transform:scaleX(0.930);color:#dfe2e7;">Beschriftung</span><svg style="left:1123.25px;top:128.6px" width="6.5" height="3.8"><path d="M0 0H6.5L3.25 3.8Z" fill="#d0d3d8"/></svg><div class="a" style="left:1170.5px;top:50px;width:1.5px;height:88px;background:#2c333f;"></div><svg style="left:1201px;top:66px" width="27" height="9" viewBox="0 0 27 9"><rect x="0" y="0.900" width="26.400" height="6.700" fill="#f4c858"/><path d="M1.8 0.900V3.2M4.1 0.900V4.2M6.4 0.900V3.2M8.7 0.900V4.2M11 0.900V3.2M13.3 0.900V4.2M15.6 0.900V3.2M17.9 0.900V4.2M20.2 0.900V3.2M22.5 0.900V4.2M24.8 0.900V3.2" stroke="#8a6a10" stroke-width="0.800"/></svg><span class="t" style="left:1195.5px;top:88px;font-size:12px;transform:scaleX(0.881);color:#e8eaee;">Messen</span><svg style="left:1211.5px;top:105px" width="5" height="3"><path d="M0 0H5L2.5 3Z" fill="#c4c8ce"/></svg><svg style="left:1246px;top:55px" width="17" height="17" viewBox="0 0 17 17"><path d="M1 5L1 14L3.500 11.500L5.500 15.500L7 14.800L5 11L8 11Z" fill="#f0f0f0"/><rect x="8" y="7" width="8" height="8" fill="#58b0f4" stroke="#d8e8f8" stroke-width="1"/><path d="M8 10H16M11 7V15" stroke="#d8e8f8" stroke-width="0.8"/><path d="M9 0L6.500 3.500H8.500L7.500 6L11 2.500H9Z" fill="#f0c040"/></svg><svg style="left:1246px;top:77.5px" width="17" height="17" viewBox="0 0 17 17"><rect x="1" y="1" width="12.500" height="12.500" fill="#3a8a50" stroke="#7ed090" stroke-width="1.300" stroke-dasharray="2 1"/><rect x="4" y="4" width="6" height="6" fill="none" stroke="#b8e8c0" stroke-width="1.200"/><path d="M9 7V16L11.300 13.800L13 17L14.500 16.300L12.800 13H16Z" fill="#f0f0f0"/></svg><svg style="left:1248px;top:100px" width="13" height="16" viewBox="0 0 13 16"><rect x="0.500" y="0.500" width="12" height="15" fill="#d8d8d8"/><rect x="2.200" y="2" width="8.600" height="3" fill="#4a4f58"/><rect x="2.2" y="6.5" width="2" height="2" fill="#4a4f58"/><rect x="5.5" y="6.5" width="2" height="2" fill="#4a4f58"/><rect x="8.8" y="6.5" width="2" height="2" fill="#4a4f58"/><rect x="2.2" y="9.5" width="2" height="2" fill="#4a4f58"/><rect x="5.5" y="9.5" width="2" height="2" fill="#4a4f58"/><rect x="8.8" y="9.5" width="2" height="2" fill="#4a4f58"/><rect x="2.2" y="12.5" width="2" height="2" fill="#4a4f58"/><rect x="5.5" y="12.5" width="2" height="2" fill="#4a4f58"/><rect x="8.8" y="12.5" width="2" height="2" fill="#4a4f58"/></svg><span class="t" style="left:1175.0px;top:123px;font-size:12px;transform:scaleX(0.933);color:#dfe2e7;">Dienstprogramme</span><svg style="left:1269.75px;top:128.6px" width="6.5" height="3.8"><path d="M0 0H6.5L3.25 3.8Z" fill="#d0d3d8"/></svg><div class="a" style="left:1281.5px;top:50px;width:1.5px;height:88px;background:#2c333f;"></div><svg style="left:1313px;top:57px" width="28" height="26" viewBox="0 0 28 26"><rect x="0" y="0" width="28" height="26" fill="#f0f0f0"/><rect x="0" y="0" width="28" height="5" fill="#bcbcbc"/><path d="M4 10H24M4 14.500H24M4 19H24" stroke="#aaa" stroke-width="1.600"/></svg><span class="t" style="left:1298.5px;top:88px;font-size:12px;transform:scaleX(0.852);color:#e8eaee;">SAUSWAHL</span><span class="t" style="left:1287.0px;top:102px;font-size:12px;transform:scaleX(0.882);color:#e8eaee;">Eigenschaftssatz</span><span class="t" style="left:1303.5px;top:123px;font-size:12px;transform:scaleX(0.881);color:#dfe2e7;">SAuswahl</span><div class="a" style="left:1371.5px;top:50px;width:1.5px;height:88px;background:#2c333f;"></div><svg style="left:1385px;top:55px" width="29" height="29" viewBox="0 0 29 29"><path d="M14.500 0.500L28.500 12H0.500Z" fill="#e4e4e4"/><rect x="3" y="12" width="23" height="13.500" fill="#cfd0d2"/><path d="M3 12V25.500H26V12M14.500 12V25.500M3 18.500H26" fill="none" stroke="#f2f2f2" stroke-width="1.600"/><path d="M14.500 5L20.500 10.500H8.500Z" fill="#cfd0d2"/><rect x="1.500" y="25.500" width="6.500" height="2.800" fill="#e4e4e4"/><rect x="21" y="25.500" width="6.500" height="2.800" fill="#e4e4e4"/></svg><span class="t" style="left:1377.0px;top:88px;font-size:12px;transform:scaleX(0.899);color:#e8eaee;">Vertikaler</span><span class="t" style="left:1382.5px;top:102px;font-size:12px;transform:scaleX(0.927);color:#e8eaee;">Schnitt</span><svg style="left:1428.5px;top:56px" width="16" height="16" viewBox="0 0 16 16"><path d="M0.500 4.500L3 1H15.500V11.500L12.500 15.500H0.500Z" fill="#e4e4e4"/><path d="M0.500 4.500L3 1H15.500L12.500 4.500Z" fill="#58b0f4"/><path d="M12.500 4.500V15.500" stroke="#aaa" stroke-width="1"/></svg><span class="t" style="left:1448.5px;top:56px;font-size:12px;transform:scaleX(0.931);color:#e8eaee;">Horizontaler Schnitt</span><svg style="left:1429px;top:77.5px" width="14" height="17" viewBox="0 0 14 17"><circle cx="6.500" cy="6" r="4" fill="none" stroke="#e0e0e0" stroke-width="1.400"/><path d="M6.500 0V4M6.500 10V16.500" stroke="#e0e0e0" stroke-width="1.400"/><path d="M4.500 5L6.500 7.500L8.500 5Z" fill="#e0e0e0"/></svg><span class="t" style="left:1448.5px;top:78px;font-size:12px;transform:scaleX(0.948);color:#e8eaee;">Schnittlinie</span><svg style="left:1428px;top:101px" width="16" height="14" viewBox="0 0 16 14"><path d="M0 8H16" stroke="#e0e0e0" stroke-width="1.300"/><circle cx="8" cy="8" r="4.300" fill="none" stroke="#e0e0e0" stroke-width="1.300"/><path d="M8 8V1" stroke="#e0e0e0" stroke-width="1.300"/></svg><span class="t" style="left:1448.5px;top:101px;font-size:12px;transform:scaleX(0.929);color:#e8eaee;">Ansichtslinie</span><span class="t" style="left:1407.5px;top:123px;font-size:12px;transform:scaleX(0.951);color:#dfe2e7;">Schnitt und Ansicht</span><svg style="left:1510.25px;top:128.6px" width="6.5" height="3.8"><path d="M0 0H6.5L3.25 3.8Z" fill="#d0d3d8"/></svg><div class="a" style="left:1552.5px;top:50px;width:1.5px;height:88px;background:#2c333f;"></div><svg style="left:1577.5px;top:56px" width="30" height="29" viewBox="0 0 30 29"><rect x="0" y="0" width="30" height="29" fill="#e4e4e4"/><rect x="0" y="0" width="30" height="5.500" fill="#8a8e95"/><circle cx="3" cy="2.700" r="1" fill="#e4e4e4"/><path d="M14.500 5.500V29" stroke="#3b4453" stroke-width="1.500"/><path d="M3 11H5M7 11H12M3 16H5M7 16H12M3 21H5M7 21H12M17 24H27" stroke="#5a5f68" stroke-width="1.500"/><path d="M17.500 10H21L26.500 14V20H17.500Z" fill="#5a5f68"/></svg><span class="t" style="left:1576.5px;top:88px;font-size:12px;transform:scaleX(0.923);color:#e8eaee;">Detail-</span><span class="t" style="left:1558.0px;top:102px;font-size:12px;transform:scaleX(0.949);color:#e8eaee;">komponenten</span><span class="t" style="left:1575.8px;top:123px;font-size:12px;transform:scaleX(0.913);color:#dfe2e7;">Details</span><div class="a" style="left:0px;top:171px;width:277.5px;height:17.5px;background:#2d3441;border-radius:0 5px 0 0;"></div><div class="a" style="left:0px;top:189px;width:280px;height:777px;background:#3b4453;border-radius:0 4px 0 0;"></div><svg style="left:5px;top:176px" width="3" height="9"><path d="M0 .5H3M0 2.500H3M0 4.500H3M0 6.500H3M0 8.500H3" stroke="#9aa0aa" stroke-width="1"/></svg><div class="a" style="left:10px;top:193.8px;width:224px;height:19px;background:#4b5468;"></div><span class="t" style="left:14.0px;top:196px;font-size:12px;transform:scaleX(0.822);color:#f0f2f5;">Alle Daten</span><svg style="left:221px;top:200.9px" width="8" height="4.2"><path d="M0 0H8L4 4.2Z" fill="#f0f2f5"/></svg><svg style="left:248px;top:196.300px" width="12.500" height="14.500" viewBox="0 0 15 18"><rect x="0.5" y="0.5" width="14" height="17" rx="1.500" fill="#f2f2f2"/><rect x="2" y="2" width="11" height="7.500" fill="#46a6f2"/><path d="M4 13.500H11M4 13.500L6 12M4 13.500L6 15" stroke="#555" stroke-width="1" fill="none"/></svg><div class="a" style="left:10px;top:217px;width:259px;height:18.8px;background:#4b5468;"></div><span class="t" style="left:13.5px;top:219px;font-size:12px;transform:scaleX(0.834);color:#f0f2f5;">Lüftung/Endbauteil/Luftdurchlass/Deckenluftdurchlas:</span><svg style="left:255.5px;top:223.9px" width="8" height="4.2"><path d="M0 0H8L4 4.2Z" fill="#f0f2f5"/></svg><div class="a" style="left:10px;top:241.7px;width:242.8px;height:663.3px;background:#2a303b;"></div><div class="a" style="left:10px;top:241.7px;width:16px;height:663.3px;background:#2b313c;"></div><div class="a" style="left:26px;top:241.731px;width:113.2px;height:14.739px;background:#3b4453;"></div><div class="a" style="left:140.2px;top:241.731px;width:112.6px;height:14.739px;background:#3b4453;"></div><span class="t" style="left:29.7px;top:241px;font-size:11px;transform:scaleX(0.875);color:#8f96a3;">Blockname</span><span class="t" style="left:143.2px;top:241px;font-size:11px;transform:scaleX(0.875);color:#7d8492;">L_65a</span><div class="a" style="left:26px;top:257.469px;width:113.2px;height:14.739px;background:#3b4453;"></div><div class="a" style="left:140.2px;top:257.469px;width:112.6px;height:14.739px;background:#3b4453;"></div><span class="t" style="left:29.7px;top:256px;font-size:11px;transform:scaleX(0.875);color:#f2f4f7;">LAYER</span><span class="t" style="left:143.2px;top:256px;font-size:11px;transform:scaleX(0.875);color:#f2f4f7;">G00_L__SYMBOLE</span><div class="a" style="left:26px;top:273.208px;width:113.2px;height:14.739px;background:#3b4453;"></div><div class="a" style="left:140.2px;top:273.208px;width:112.6px;height:14.739px;background:#3b4453;"></div><span class="t" style="left:29.7px;top:272px;font-size:11px;transform:scaleX(0.875);color:#8f96a3;">ObjectHandle</span><span class="t" style="left:143.2px;top:272px;font-size:11px;transform:scaleX(0.875);color:#f2f4f7;">4023C</span><div class="a" style="left:26px;top:288.447px;width:226.8px;height:15.739px;background:#2c323e;"></div><svg style="left:13px;top:291.8px" width="9" height="9"><rect x="0.5" y="0.5" width="8" height="8" fill="none" stroke="#e8eaee" stroke-width="1"/><path d="M2.500 4.500H6.500" stroke="#e8eaee" stroke-width="1"/></svg><span class="t" style="left:29.7px;top:288px;font-size:11.5px;transform:scaleX(0.945);color:#ffffff;font-weight:bold;">Berechnung - Artikeldaten</span><div class="a" style="left:26px;top:304.686px;width:113.2px;height:14.739px;background:#3b4453;"></div><div class="a" style="left:140.2px;top:304.686px;width:112.6px;height:14.739px;background:#f0a3a8;"></div><span class="t" style="left:29.7px;top:304px;font-size:11px;transform:scaleX(0.875);color:#8f96a3;">Artikelnummer</span><span class="t" style="left:143.2px;top:304px;font-size:11px;transform:scaleX(0.875);color:#f8c8cb;">-</span><div class="a" style="left:26px;top:320.425px;width:113.2px;height:14.739px;background:#3b4453;"></div><div class="a" style="left:140.2px;top:320.425px;width:112.6px;height:14.739px;background:#3b4453;"></div><span class="t" style="left:29.7px;top:319px;font-size:11px;transform:scaleX(0.875);color:#f2f4f7;">Bezeichnung</span><span class="t" style="left:143.2px;top:319px;font-size:11px;transform:scaleX(0.875);color:#f2f4f7;">Düsenauslass seite 5...</span><div class="a" style="left:26px;top:336.164px;width:113.2px;height:14.739px;background:#3b4453;"></div><div class="a" style="left:140.2px;top:336.164px;width:112.6px;height:14.739px;background:#f0a3a8;"></div><span class="t" style="left:29.7px;top:335px;font-size:11px;transform:scaleX(0.875);color:#8f96a3;">Hersteller</span><span class="t" style="left:143.2px;top:335px;font-size:11px;transform:scaleX(0.875);color:#f8c8cb;">-</span><div class="a" style="left:26px;top:351.904px;width:113.2px;height:14.739px;background:#3b4453;"></div><div class="a" style="left:140.2px;top:351.904px;width:112.6px;height:14.739px;background:#3b4453;"></div><span class="t" style="left:29.7px;top:351px;font-size:11px;transform:scaleX(0.875);color:#f2f4f7;">Kurztext</span><span class="t" style="left:143.2px;top:351px;font-size:11px;transform:scaleX(0.875);color:#f2f4f7;">Deckenluftdurchlass</span><div class="a" style="left:26px;top:367.142px;width:226.8px;height:15.739px;background:#2c323e;"></div><svg style="left:13px;top:370.5px" width="9" height="9"><rect x="0.5" y="0.5" width="8" height="8" fill="none" stroke="#e8eaee" stroke-width="1"/><path d="M2.500 4.500H6.500" stroke="#e8eaee" stroke-width="1"/></svg><span class="t" style="left:29.7px;top:367px;font-size:11.5px;transform:scaleX(0.945);color:#ffffff;font-weight:bold;">Gebäudedaten - Lüftung</span><div class="a" style="left:26px;top:383.381px;width:113.2px;height:14.739px;background:#3b4453;"></div><div class="a" style="left:140.2px;top:383.381px;width:112.6px;height:14.739px;background:#3b4453;"></div><span class="t" style="left:29.7px;top:382px;font-size:11px;transform:scaleX(0.875);color:#f2f4f7;">Raumluftfeuchte</span><span class="t" style="left:143.2px;top:382px;font-size:11px;transform:scaleX(0.875);color:#f2f4f7;">25.0 %</span><div class="a" style="left:26px;top:399.12px;width:113.2px;height:14.739px;background:#3b4453;"></div><div class="a" style="left:140.2px;top:399.12px;width:112.6px;height:14.739px;background:#3b4453;"></div><span class="t" style="left:29.7px;top:398px;font-size:11px;transform:scaleX(0.875);color:#f2f4f7;">Temperatur: Raumtem...</span><span class="t" style="left:143.2px;top:398px;font-size:11px;transform:scaleX(0.875);color:#f2f4f7;">0.0 °C</span><div class="a" style="left:26px;top:414.36px;width:226.8px;height:15.739px;background:#2c323e;"></div><svg style="left:13px;top:417.7px" width="9" height="9"><rect x="0.5" y="0.5" width="8" height="8" fill="none" stroke="#e8eaee" stroke-width="1"/><path d="M2.500 4.500H6.500" stroke="#e8eaee" stroke-width="1"/></svg><span class="t" style="left:29.7px;top:414px;font-size:11.5px;transform:scaleX(0.945);color:#ffffff;font-weight:bold;">Lüftung - Artikeldaten</span><div class="a" style="left:26px;top:430.598px;width:113.2px;height:14.739px;background:#3b4453;"></div><div class="a" style="left:140.2px;top:430.598px;width:112.6px;height:14.739px;background:#3b4453;"></div><span class="t" style="left:29.7px;top:429px;font-size:11px;transform:scaleX(0.875);color:#8f96a3;">Kennung</span><span class="t" style="left:143.2px;top:429px;font-size:11px;transform:scaleX(0.875);color:#f2f4f7;">DLDL</span><div class="a" style="left:26px;top:445.837px;width:226.8px;height:15.739px;background:#2c323e;"></div><svg style="left:13px;top:449.2px" width="9" height="9"><rect x="0.5" y="0.5" width="8" height="8" fill="none" stroke="#e8eaee" stroke-width="1"/><path d="M2.500 4.500H6.500" stroke="#e8eaee" stroke-width="1"/></svg><span class="t" style="left:29.7px;top:445px;font-size:11.5px;transform:scaleX(0.945);color:#ffffff;font-weight:bold;">Lüftung - Berechnungsdaten</span><div class="a" style="left:26px;top:462.077px;width:113.2px;height:14.739px;background:#3b4453;"></div><div class="a" style="left:140.2px;top:462.077px;width:112.6px;height:14.739px;background:#3b4453;"></div><span class="t" style="left:29.7px;top:461px;font-size:11px;transform:scaleX(0.875);color:#f2f4f7;">Druckverlust</span><span class="t" style="left:143.2px;top:461px;font-size:11px;transform:scaleX(0.875);color:#f2f4f7;">30 Pa</span><div class="a" style="left:26px;top:477.815px;width:113.2px;height:14.739px;background:#3b4453;"></div><div class="a" style="left:140.2px;top:477.815px;width:112.6px;height:14.739px;background:#3b4453;"></div><span class="t" style="left:29.7px;top:477px;font-size:11px;transform:scaleX(0.875);color:#8f96a3;">Druckverlust Abgleich</span><span class="t" style="left:143.2px;top:477px;font-size:11px;transform:scaleX(0.875);color:#f2f4f7;">0 Pa</span><div class="a" style="left:26px;top:493.554px;width:113.2px;height:14.739px;background:#3b4453;"></div><div class="a" style="left:140.2px;top:493.554px;width:112.6px;height:14.739px;background:#f0a3a8;"></div><span class="t" style="left:29.7px;top:492px;font-size:11px;transform:scaleX(0.875);color:#8f96a3;">Einstellung Abgleich</span><span class="t" style="left:143.2px;top:492px;font-size:11px;transform:scaleX(0.875);color:#f8c8cb;">-</span><div class="a" style="left:26px;top:509.293px;width:113.2px;height:14.739px;background:#3b4453;"></div><div class="a" style="left:140.2px;top:509.293px;width:112.6px;height:14.739px;background:#3b4453;"></div><span class="t" style="left:29.7px;top:508px;font-size:11px;transform:scaleX(0.875);color:#f2f4f7;">Volumenstrom</span><span class="t" style="left:143.2px;top:508px;font-size:11px;transform:scaleX(0.875);color:#f2f4f7;">300.00 m3/h</span><div class="a" style="left:26px;top:525.033px;width:113.2px;height:14.739px;background:#3b4453;"></div><div class="a" style="left:140.2px;top:525.033px;width:112.6px;height:14.739px;background:#3b4453;"></div><span class="t" style="left:29.7px;top:524px;font-size:11px;transform:scaleX(0.875);color:#8f96a3;">Volumenstrom je Stutz...</span><span class="t" style="left:143.2px;top:524px;font-size:11px;transform:scaleX(0.875);color:#f2f4f7;">300.00 m3/h</span><div class="a" style="left:26px;top:540.771px;width:113.2px;height:14.739px;background:#3b4453;"></div><div class="a" style="left:140.2px;top:540.771px;width:112.6px;height:14.739px;background:#3b4453;"></div><span class="t" style="left:29.7px;top:540px;font-size:11px;transform:scaleX(0.875);color:#8f96a3;">Zeta-Wert</span><span class="t" style="left:143.2px;top:540px;font-size:11px;transform:scaleX(0.875);color:#f2f4f7;">0.10</span><div class="a" style="left:26px;top:556.01px;width:226.8px;height:15.739px;background:#2c323e;"></div><svg style="left:13px;top:559.4px" width="9" height="9"><rect x="0.5" y="0.5" width="8" height="8" fill="none" stroke="#e8eaee" stroke-width="1"/><path d="M2.500 4.500H6.500" stroke="#e8eaee" stroke-width="1"/></svg><span class="t" style="left:29.7px;top:555px;font-size:11.5px;transform:scaleX(0.945);color:#ffffff;font-weight:bold;">Lüftung - Berechnungseinstellung</span><div class="a" style="left:26px;top:572.25px;width:113.2px;height:14.739px;background:#3b4453;"></div><div class="a" style="left:140.2px;top:572.25px;width:112.6px;height:14.739px;background:#3b4453;"></div><span class="t" style="left:29.7px;top:571px;font-size:11px;transform:scaleX(0.875);color:#f2f4f7;">Druckverlustberechnu...</span><span class="t" style="left:143.2px;top:571px;font-size:11px;transform:scaleX(0.875);color:#f2f4f7;">manuelle Eingabe Dru...</span><div class="a" style="left:26px;top:587.989px;width:113.2px;height:14.739px;background:#3b4453;"></div><div class="a" style="left:140.2px;top:587.989px;width:112.6px;height:14.739px;background:#3b4453;"></div><span class="t" style="left:29.7px;top:587px;font-size:11px;transform:scaleX(0.875);color:#f2f4f7;">Dämpfung berechnet</span><svg style="left:142.500px;top:590.4px" width="10" height="10"><rect x="0.600" y="0.600" width="8.800" height="8.800" fill="none" stroke="#f0f2f5" stroke-width="1.200"/></svg><div class="a" style="left:26px;top:603.727px;width:113.2px;height:14.739px;background:#3b4453;"></div><div class="a" style="left:140.2px;top:603.727px;width:112.6px;height:14.739px;background:#3b4453;"></div><span class="t" style="left:29.7px;top:603px;font-size:11px;transform:scaleX(0.875);color:#f2f4f7;">Eigengeräusch berec...</span><span class="t" style="left:143.2px;top:603px;font-size:11px;transform:scaleX(0.875);color:#f2f4f7;">nein, Eingabe manuell</span><div class="a" style="left:26px;top:618.966px;width:226.8px;height:15.739px;background:#2c323e;"></div><svg style="left:13px;top:622.3px" width="9" height="9"><rect x="0.5" y="0.5" width="8" height="8" fill="none" stroke="#e8eaee" stroke-width="1"/><path d="M2.500 4.500H6.500" stroke="#e8eaee" stroke-width="1"/></svg><span class="t" style="left:29.7px;top:618px;font-size:11.5px;transform:scaleX(0.945);color:#ffffff;font-weight:bold;">Lüftung - Geometrie</span><div class="a" style="left:26px;top:635.206px;width:113.2px;height:14.739px;background:#3b4453;"></div><div class="a" style="left:140.2px;top:635.206px;width:112.6px;height:14.739px;background:#3b4453;"></div><span class="t" style="left:29.7px;top:634px;font-size:11px;transform:scaleX(0.875);color:#f2f4f7;">Abstrahlwinkel</span><span class="t" style="left:143.2px;top:634px;font-size:11px;transform:scaleX(0.875);color:#f2f4f7;">0°</span><div class="a" style="left:26px;top:650.944px;width:113.2px;height:14.739px;background:#3b4453;"></div><div class="a" style="left:140.2px;top:650.944px;width:112.6px;height:14.739px;background:#3b4453;"></div><span class="t" style="left:29.7px;top:650px;font-size:11px;transform:scaleX(0.875);color:#f2f4f7;">Anordnung im Raum</span><span class="t" style="left:143.2px;top:650px;font-size:11px;transform:scaleX(0.875);color:#f2f4f7;">In Raummitte</span><div class="a" style="left:26px;top:666.683px;width:113.2px;height:14.739px;background:#3b4453;"></div><div class="a" style="left:140.2px;top:666.683px;width:112.6px;height:14.739px;background:#3b4453;"></div><span class="t" style="left:29.7px;top:666px;font-size:11px;transform:scaleX(0.875);color:#f2f4f7;">Anschlussgeometrie A...</span><span class="t" style="left:143.2px;top:666px;font-size:11px;transform:scaleX(0.875);color:#f2f4f7;">rund</span><div class="a" style="left:26px;top:682.423px;width:113.2px;height:14.739px;background:#3b4453;"></div><div class="a" style="left:140.2px;top:682.423px;width:112.6px;height:14.739px;background:#3b4453;"></div><span class="t" style="left:29.7px;top:681px;font-size:11px;transform:scaleX(0.875);color:#8f96a3;">Geometrische Fläche ...</span><span class="t" style="left:143.2px;top:681px;font-size:11px;transform:scaleX(0.875);color:#f2f4f7;">0.03 m2</span><div class="a" style="left:26px;top:697.662px;width:226.8px;height:15.739px;background:#2c323e;"></div><svg style="left:13px;top:701.0px" width="9" height="9"><rect x="0.5" y="0.5" width="8" height="8" fill="none" stroke="#e8eaee" stroke-width="1"/><path d="M2.500 4.500H6.500" stroke="#e8eaee" stroke-width="1"/></svg><span class="t" style="left:29.7px;top:697px;font-size:11.5px;transform:scaleX(0.945);color:#ffffff;font-weight:bold;">Lüftung - Schalldaten</span><div class="a" style="left:26px;top:713.9px;width:113.2px;height:14.739px;background:#3b4453;"></div><div class="a" style="left:140.2px;top:713.9px;width:112.6px;height:14.739px;background:#3b4453;"></div><span class="t" style="left:29.7px;top:713px;font-size:11px;transform:scaleX(0.875);color:#f2f4f7;">Dämpfung</span><span class="t" style="left:143.2px;top:713px;font-size:11px;transform:scaleX(0.875);color:#f2f4f7;">19.1;13.2;7.8;3.5;1.2;...</span><div class="a" style="left:26px;top:729.639px;width:113.2px;height:14.739px;background:#3b4453;"></div><div class="a" style="left:140.2px;top:729.639px;width:112.6px;height:14.739px;background:#3b4453;"></div><span class="t" style="left:29.7px;top:729px;font-size:11px;transform:scaleX(0.875);color:#8f96a3;">Restschallpegel</span><span class="t" style="left:143.2px;top:729px;font-size:11px;transform:scaleX(0.875);color:#f2f4f7;">0.0;0.0;0.0;0.0;0.0;0.0...</span><div class="a" style="left:26px;top:745.379px;width:113.2px;height:14.739px;background:#3b4453;"></div><div class="a" style="left:140.2px;top:745.379px;width:112.6px;height:14.739px;background:#3b4453;"></div><span class="t" style="left:29.7px;top:744px;font-size:11px;transform:scaleX(0.875);color:#8f96a3;">Restschallpegel A be...</span><span class="t" style="left:143.2px;top:744px;font-size:11px;transform:scaleX(0.875);color:#f2f4f7;">0.0;0.0;0.0;0.0;0.0;0.0...</span><div class="a" style="left:26px;top:761.118px;width:113.2px;height:14.739px;background:#3b4453;"></div><div class="a" style="left:140.2px;top:761.118px;width:112.6px;height:14.739px;background:#3b4453;"></div><span class="t" style="left:29.7px;top:760px;font-size:11px;transform:scaleX(0.875);color:#8f96a3;">Restschallpegel Summe</span><span class="t" style="left:143.2px;top:760px;font-size:11px;transform:scaleX(0.875);color:#f2f4f7;">0.00 dB</span><div class="a" style="left:26px;top:776.856px;width:113.2px;height:14.739px;background:#3b4453;"></div><div class="a" style="left:140.2px;top:776.856px;width:112.6px;height:14.739px;background:#3b4453;"></div><span class="t" style="left:29.7px;top:776px;font-size:11px;transform:scaleX(0.875);color:#8f96a3;">Restschallpegel Sum...</span><span class="t" style="left:143.2px;top:776px;font-size:11px;transform:scaleX(0.875);color:#f2f4f7;">0.00 dB(A)</span><div class="a" style="left:26px;top:792.596px;width:113.2px;height:14.739px;background:#3b4453;"></div><div class="a" style="left:140.2px;top:792.596px;width:112.6px;height:14.739px;background:#3b4453;"></div><span class="t" style="left:29.7px;top:791px;font-size:11px;transform:scaleX(0.875);color:#f2f4f7;">Schallpegel</span><span class="t" style="left:143.2px;top:791px;font-size:11px;transform:scaleX(0.875);color:#f2f4f7;">0.0;0.0;0.0;0.0;0.0;0.0...</span><div class="a" style="left:26px;top:808.335px;width:113.2px;height:14.739px;background:#3b4453;"></div><div class="a" style="left:140.2px;top:808.335px;width:112.6px;height:14.739px;background:#3b4453;"></div><span class="t" style="left:29.7px;top:807px;font-size:11px;transform:scaleX(0.875);color:#8f96a3;">Summenschallpegel</span><span class="t" style="left:143.2px;top:807px;font-size:11px;transform:scaleX(0.875);color:#f2f4f7;">0.00 dB(A)</span><div class="a" style="left:26px;top:823.574px;width:226.8px;height:15.739px;background:#2c323e;"></div><svg style="left:13px;top:826.9px" width="9" height="9"><rect x="0.5" y="0.5" width="8" height="8" fill="none" stroke="#e8eaee" stroke-width="1"/><path d="M2.500 4.500H6.500" stroke="#e8eaee" stroke-width="1"/></svg><span class="t" style="left:29.7px;top:823px;font-size:11.5px;transform:scaleX(0.945);color:#ffffff;font-weight:bold;">Lüftung - Verortung</span><div class="a" style="left:26px;top:839.812px;width:113.2px;height:14.739px;background:#3b4453;"></div><div class="a" style="left:140.2px;top:839.812px;width:112.6px;height:14.739px;background:#f0a3a8;"></div><span class="t" style="left:29.7px;top:839px;font-size:11px;transform:scaleX(0.875);color:#8f96a3;">Anlagenbezeichnung</span><span class="t" style="left:143.2px;top:839px;font-size:11px;transform:scaleX(0.875);color:#f8c8cb;">-</span><div class="a" style="left:26px;top:855.552px;width:113.2px;height:14.739px;background:#3b4453;"></div><div class="a" style="left:140.2px;top:855.552px;width:112.6px;height:14.739px;background:#f0a3a8;"></div><span class="t" style="left:29.7px;top:854px;font-size:11px;transform:scaleX(0.875);color:#8f96a3;">Anlagenkürzel</span><span class="t" style="left:143.2px;top:854px;font-size:11px;transform:scaleX(0.875);color:#f8c8cb;">-</span><div class="a" style="left:26px;top:871.291px;width:113.2px;height:14.739px;background:#3b4453;"></div><div class="a" style="left:140.2px;top:871.291px;width:112.6px;height:14.739px;background:#3b4453;"></div><span class="t" style="left:29.7px;top:870px;font-size:11px;transform:scaleX(0.875);color:#8f96a3;">Bauteilnummer</span><span class="t" style="left:143.2px;top:870px;font-size:11px;transform:scaleX(0.875);color:#f2f4f7;">43</span><div class="a" style="left:26px;top:887.029px;width:113.2px;height:14.739px;background:#3b4453;"></div><div class="a" style="left:140.2px;top:887.029px;width:112.6px;height:14.739px;background:#3b4453;"></div><span class="t" style="left:29.7px;top:886px;font-size:11px;transform:scaleX(0.875);color:#8f96a3;">Raumnummer</span><span class="t" style="left:143.2px;top:886px;font-size:11px;transform:scaleX(0.875);color:#f2f4f7;">8</span><div class="a" style="left:252.8px;top:241.7px;width:16px;height:663.3px;background:#f1f1f1;"></div><div class="a" style="left:252.8px;top:305px;width:16px;height:391px;background:#c9c9c9;"></div><svg style="left:256.300px;top:247px" width="9" height="6"><path d="M0.800 5L4.500 1.300L8.200 5" fill="none" stroke="#555" stroke-width="1.500"/></svg><svg style="left:256.300px;top:894px" width="9" height="6"><path d="M0.800 1L4.500 4.700L8.200 1" fill="none" stroke="#555" stroke-width="1.500"/></svg><div class="a" style="left:11px;top:909.5px;width:257px;height:48.5px;background:#3b4453;box-sizing:border-box;border:1px solid #9197a3;"></div><svg style="left:282px;top:168.500px" width="1273.500" height="747.500" viewBox="282 168.500 1273.500 747.500" font-family="Liberation Sans,sans-serif"><rect x="282" y="168.500" width="1273.500" height="747.500" fill="#22282f"/><path d="M305 246.2H573.5M308.5 249.5H573.5M311.7 253H573.5M316.7 258.3H573.5M305 246.2V561.5M308.5 249.5V561.5M311.7 253V559.3M316.7 258.3V537.7M305 561.5H308.5M316.7 544.9V559.3M305 625V916M308.5 625V916M311.7 627.5V916M316.7 627.5V635.3M316.7 746V916M316.7 642.6V740.7M305 625H308.5M371 246.2V249.5M369 253V258.3M455 246.2V249.5M453 253V258.3M474 246.2V249.5M472 253V258.3M557 246.2V249.5M555 253V258.3M305 320H308.5M311.7 318H316.7M305 405.6H308.5M311.7 403.6H316.7M305 448H308.5M311.7 446H316.7M305 470H308.5M311.7 468H316.7M305 492H308.5M311.7 490H316.7M305 517H308.5M311.7 515H316.7M305 775H308.5M311.7 773H316.7M305 860.5H308.5M311.7 858.5H316.7M462.9 258.3V537.8M468.4 258.3V537.8M458.5 537.8H472V545H458.5ZM462.9 642.8V916M468.4 642.8V916M458.5 635.4H472V642.8H458.5ZM573.8 258.3V537.8M581.3 258.3V559M573.8 545V559M581.3 628.2V916M573.8 628.2V635.4M573.8 643V916M573.5 469H588.9V484.7H573.5ZM573.5 695H588.9V710.7H573.5ZM573.8 559H615.5M573.8 628.2H615.5M615.5 559A34.6 34.6 0 0 1 581 593.6M615.5 628.2A34.6 34.6 0 0 0 581 593.6M581 593.6H589.5M316.7 545H377.2M403.6 545H432.4M498.5 545H573.8M316.7 537.7H366.8M369.7 537.7H377.2M377.2 537.7V545M403.6 537.7V545M403.6 537.7H408.4M413.5 537.7H432.4M432.4 537.7V545M498.5 537.8H573.8M498.5 537.8V545M316.7 635.3H377.2M403.6 635.3H431.2M498.5 635.3H573.8M316.7 642.6H377.2M377.2 635.3V642.6M403.6 635.3V642.6M403.6 642.6H408.4M413.5 642.6H431.2M431.2 635.3V642.6M498.5 643H573.8M498.5 635.3V643M458.5 510.5A27.3 27.3 0 0 0 431.2 537.8M458.5 510.5H459.6V537.8H458.5ZM472 510.5A27.3 27.3 0 0 1 499.3 537.8M470.9 510.5H472V537.8H470.9ZM431.2 642.8A27.3 27.3 0 0 0 458.5 670.1M458.5 642.8H459.6V670.1H458.5ZM472 670.1A27.3 27.3 0 0 0 499.3 642.8M470.9 642.8H472V670.1H470.9ZM404.4 510.4A27.2 27.2 0 0 0 377.2 537.6M404.4 510.4H405.4V537.6H404.4ZM377.2 642.6A27.2 27.2 0 0 0 404.4 669.8M404.4 642.6H405.4V669.8H404.4ZM316.7 425.9L413.5 425.9L413.5 537.7M316.7 431.2L366.8 431.2L366.8 449.9M369.7 449.9L369.7 431.2L408.4 431.2L408.4 537.7M366.8 449.9H369.7M316.7 480L366.8 480L366.8 476.8L369.7 476.8L369.7 488L366.8 488L366.8 484.8L316.7 484.8M366.8 537.7L366.8 514.9L369.7 514.9L369.7 537.7M369.7 449.9A27.5 27.5 0 0 0 342.2 477.4M342.2 487.4A27.5 27.5 0 0 0 369.7 514.9M316.7 740.7L408.4 740.7L408.4 642.6M316.7 746L413.5 746L413.5 642.6M305 543.5L285.2 543.5L285.2 643.2L305 643.2M305 551.2L292.9 551.2L292.9 635.2L305 635.2M352.2 559.3L300.9 559.3L300.9 627.5L352.2 627.5M352.2 559.3A35 35 0 0 1 317.2 593.5M352.2 627.5A35 35 0 0 0 317.2 593.5M317.2 593.5H324M573.5 242.6H1434.2M573.5 242.6H588.9V258.3H573.5ZM694.2 242.6H710V258.3H694.2ZM814.9 242.6H830.7V258.3H814.9ZM935.5 242.6H951.3V258.3H935.5ZM1056.2 242.6H1072V258.3H1056.2ZM1176.9 242.6H1192.7V258.3H1176.9ZM1297.6 242.6H1313.4V258.3H1297.6ZM1418.3 242.6H1434.1V258.3H1418.3ZM588.9 254.3L593.4 254.3L593.4 246.2L689.7 246.2L689.7 254.3L694.2 254.3M593.4 254.3H689.7M596.4 242.6V246.2M686.7 242.6V246.2M710 254.3L714.5 254.3L714.5 246.2L810.4 246.2L810.4 254.3L814.9 254.3M714.5 254.3H810.4M717.5 242.6V246.2M807.4 242.6V246.2M830.7 254.3L835.2 254.3L835.2 246.2L931 246.2L931 254.3L935.5 254.3M835.2 254.3H931M838.2 242.6V246.2M928 242.6V246.2M951.3 254.3L955.8 254.3L955.8 246.2L1051.7 246.2L1051.7 254.3L1056.2 254.3M955.8 254.3H1051.7M958.8 242.6V246.2M1048.7 242.6V246.2M1072 254.3L1076.5 254.3L1076.5 246.2L1172.4 246.2L1172.4 254.3L1176.9 254.3M1076.5 254.3H1172.4M1079.5 242.6V246.2M1169.4 242.6V246.2M1192.7 254.3L1197.2 254.3L1197.2 246.2L1293.1 246.2L1293.1 254.3L1297.6 254.3M1197.2 254.3H1293.1M1200.2 242.6V246.2M1290.1 242.6V246.2M1313.4 254.3L1317.9 254.3L1317.9 246.2L1413.8 246.2L1413.8 254.3L1418.3 254.3M1317.9 254.3H1413.8M1320.9 242.6V246.2M1410.8 242.6V246.2M1176.7 258.3V307.3M1426.3 258.3L1426.3 283.5L1428.7 283.5L1428.7 287.7L1434.3 287.7L1434.3 258.3M1432.9 258.3V287.7M1357.3 289.4H1446.3V437.9H1357.3ZM1357.3 289.4L1446.3 437.9M1446.3 289.4L1357.3 437.9M1426.3 916L1426.3 441.2L1430.2 441.2L1430.2 439.3L1434.3 439.3L1434.3 916M1432.9 439.3V916M1418.2 468.8H1433.2V484.4H1418.2ZM1418.2 695H1433.2V710.6H1418.2Z" fill="none" stroke="#d0d0d2" stroke-width="1.3"/><path d="M641.3 375.2H1368.9M762 556.2H1368.9M641.3 797.5H1368.9M1368.9 375.2V895.5M641.3 331.2V375.2M641.3 797.5V835.3M762 331.2V375.2M762 797.5V835.3M882.7 331.2V375.2M882.7 797.5V835.3M1003.4 331.2V375.2M1003.4 797.5V835.3M1124.1 331.2V375.2M1124.1 797.5V835.3M1244.8 331.2V375.2M1244.8 797.5V835.3M762 556.2V579M1003.4 556.2V579M1244.8 556.2V579M388.1 443.2V677M327.9 465.9H388.1M332.5 496H388.1M327.9 455.4V465.9M352.8 677H388.1" fill="none" stroke="#c2be0c" stroke-width="1.75"/><path d="M642.2 511H1398.9M646.5 677H1398.9M1398.9 511V751.2M642.2 449.3V511M762.9 449.3V511M883.6 449.3V511M1004.3 449.3V511M1125 449.3V511M1245.7 449.3V511M646.5 677V732M767.2 677V732M887.9 677V732M1008.6 677V732M1129.3 677V732M1250 677V732M887.4 604.8V677M1129.2 604.8V677M358 306V384M418.3 306V384M523.7 306V384M358 345.2H523.7M358 802.6V880.7M418.3 802.6V880.7M523.7 802.6V880.7M358 841.5H523.7M448.4 345.2V841.5M448.4 481.1H517.5M448.4 705.5H517.5M399.3 597.3H448.4M399.3 597.3V708.9M352.8 708.9H399.3" fill="none" stroke="#1238b6" stroke-width="1.95"/><path d="M646.5 604.5V677" fill="none" stroke="#2a55d8" stroke-width="1.4"/><path d="M1123.4 895.5H1190M1123.4 895.5V916" fill="none" stroke="#8e8a34" stroke-width="1.2"/><path d="M1206.6 895.5H1368.9" fill="none" stroke="#c2be0c" stroke-width="1.75"/><path d="M304.5 677H344" fill="none" stroke="#9a8238" stroke-width="1.2"/><path d="M304.5 708.9H344" fill="none" stroke="#468c50" stroke-width="1.9"/><path d="M1398.9 766.7V870" fill="none" stroke="#4f8a55" stroke-width="1.5"/><path d="M1398.9 883V916" fill="none" stroke="#7fa487" stroke-width="3.4"/><path d="M1398.9 883V916" fill="none" stroke="#dfe8df" stroke-width="1.2"/><path d="M1332.5 556.3H1335.5M1332.5 797.6H1335.5M1368.9 479.5V482.3" fill="none" stroke="#f4f4f0" stroke-width="1.400"/><path d="M639.8 375.2A1.6 1.6 0 1 0 642.8 375.2A1.6 1.6 0 1 0 639.8 375.2M760.5 375.2A1.6 1.6 0 1 0 763.5 375.2A1.6 1.6 0 1 0 760.5 375.2M881.1 375.2A1.6 1.6 0 1 0 884.2 375.2A1.6 1.6 0 1 0 881.1 375.2M1001.9 375.2A1.6 1.6 0 1 0 1004.9 375.2A1.6 1.6 0 1 0 1001.9 375.2M1122.5 375.2A1.6 1.6 0 1 0 1125.6 375.2A1.6 1.6 0 1 0 1122.5 375.2M1243.2 375.2A1.6 1.6 0 1 0 1246.3 375.2A1.6 1.6 0 1 0 1243.2 375.2M1367.4 375.2A1.6 1.6 0 1 0 1370.5 375.2A1.6 1.6 0 1 0 1367.4 375.2M1367.4 556.2A1.6 1.6 0 1 0 1370.5 556.2A1.6 1.6 0 1 0 1367.4 556.2M1367.4 797.5A1.6 1.6 0 1 0 1370.5 797.5A1.6 1.6 0 1 0 1367.4 797.5M1367.4 895.5A1.6 1.6 0 1 0 1370.5 895.5A1.6 1.6 0 1 0 1367.4 895.5M1121.9 895.5A1.6 1.6 0 1 0 1125 895.5A1.6 1.6 0 1 0 1121.9 895.5M760.5 556.2A1.6 1.6 0 1 0 763.5 556.2A1.6 1.6 0 1 0 760.5 556.2M1001.9 556.2A1.6 1.6 0 1 0 1004.9 556.2A1.6 1.6 0 1 0 1001.9 556.2M1243.2 556.2A1.6 1.6 0 1 0 1246.3 556.2A1.6 1.6 0 1 0 1243.2 556.2M639.8 797.5A1.6 1.6 0 1 0 642.8 797.5A1.6 1.6 0 1 0 639.8 797.5M760.5 797.5A1.6 1.6 0 1 0 763.5 797.5A1.6 1.6 0 1 0 760.5 797.5M881.1 797.5A1.6 1.6 0 1 0 884.2 797.5A1.6 1.6 0 1 0 881.1 797.5M1001.9 797.5A1.6 1.6 0 1 0 1004.9 797.5A1.6 1.6 0 1 0 1001.9 797.5M1122.5 797.5A1.6 1.6 0 1 0 1125.6 797.5A1.6 1.6 0 1 0 1122.5 797.5M1243.2 797.5A1.6 1.6 0 1 0 1246.3 797.5A1.6 1.6 0 1 0 1243.2 797.5M386.6 465.9A1.6 1.6 0 1 0 389.7 465.9A1.6 1.6 0 1 0 386.6 465.9M386.6 496A1.6 1.6 0 1 0 389.7 496A1.6 1.6 0 1 0 386.6 496M326.3 465.9A1.6 1.6 0 1 0 329.4 465.9A1.6 1.6 0 1 0 326.3 465.9M386.6 677A1.6 1.6 0 1 0 389.7 677A1.6 1.6 0 1 0 386.6 677" fill="#8a8820" stroke="#ecece4" stroke-width="1"/><path d="M640.7 511A1.6 1.6 0 1 0 643.8 511A1.6 1.6 0 1 0 640.7 511M761.4 511A1.6 1.6 0 1 0 764.5 511A1.6 1.6 0 1 0 761.4 511M882.1 511A1.6 1.6 0 1 0 885.1 511A1.6 1.6 0 1 0 882.1 511M1002.8 511A1.6 1.6 0 1 0 1005.9 511A1.6 1.6 0 1 0 1002.8 511M1123.5 511A1.6 1.6 0 1 0 1126.5 511A1.6 1.6 0 1 0 1123.5 511M1244.2 511A1.6 1.6 0 1 0 1247.2 511A1.6 1.6 0 1 0 1244.2 511M1397.4 511A1.6 1.6 0 1 0 1400.5 511A1.6 1.6 0 1 0 1397.4 511M1397.4 677A1.6 1.6 0 1 0 1400.5 677A1.6 1.6 0 1 0 1397.4 677M645 677A1.6 1.6 0 1 0 648 677A1.6 1.6 0 1 0 645 677M765.7 677A1.6 1.6 0 1 0 768.8 677A1.6 1.6 0 1 0 765.7 677M886.4 677A1.6 1.6 0 1 0 889.4 677A1.6 1.6 0 1 0 886.4 677M1007.1 677A1.6 1.6 0 1 0 1010.1 677A1.6 1.6 0 1 0 1007.1 677M1127.8 677A1.6 1.6 0 1 0 1130.8 677A1.6 1.6 0 1 0 1127.8 677M1248.5 677A1.6 1.6 0 1 0 1251.5 677A1.6 1.6 0 1 0 1248.5 677M356.4 345.2A1.6 1.6 0 1 0 359.6 345.2A1.6 1.6 0 1 0 356.4 345.2M416.8 345.2A1.6 1.6 0 1 0 419.9 345.2A1.6 1.6 0 1 0 416.8 345.2M446.8 345.2A1.6 1.6 0 1 0 449.9 345.2A1.6 1.6 0 1 0 446.8 345.2M522.2 345.2A1.6 1.6 0 1 0 525.2 345.2A1.6 1.6 0 1 0 522.2 345.2M356.4 841.5A1.6 1.6 0 1 0 359.6 841.5A1.6 1.6 0 1 0 356.4 841.5M416.8 841.5A1.6 1.6 0 1 0 419.9 841.5A1.6 1.6 0 1 0 416.8 841.5M446.8 841.5A1.6 1.6 0 1 0 449.9 841.5A1.6 1.6 0 1 0 446.8 841.5M522.2 841.5A1.6 1.6 0 1 0 525.2 841.5A1.6 1.6 0 1 0 522.2 841.5M446.8 481.1A1.6 1.6 0 1 0 449.9 481.1A1.6 1.6 0 1 0 446.8 481.1M446.8 705.5A1.6 1.6 0 1 0 449.9 705.5A1.6 1.6 0 1 0 446.8 705.5M397.8 597.3A1.6 1.6 0 1 0 400.9 597.3A1.6 1.6 0 1 0 397.8 597.3M446.8 597.3A1.6 1.6 0 1 0 449.9 597.3A1.6 1.6 0 1 0 446.8 597.3M397.8 708.9A1.6 1.6 0 1 0 400.9 708.9A1.6 1.6 0 1 0 397.8 708.9" fill="#2a4aa8" stroke="#eceef4" stroke-width="1"/><path d="M629.9 307.9H652.7V330.7H629.9ZM636 307.9L641.3 313.8L646.6 307.9M636 330.7L641.3 324.8L646.6 330.7M629.9 314L635.8 319.3L629.9 324.6M652.7 314L646.8 319.3L652.7 324.6M629.9 835.8H652.7V858.6H629.9ZM636 835.8L641.3 841.7L646.6 835.8M636 858.6L641.3 852.7L646.6 858.6M629.9 841.9L635.8 847.2L629.9 852.5M652.7 841.9L646.8 847.2L652.7 852.5M750.6 307.9H773.4V330.7H750.6ZM756.7 307.9L762 313.8L767.3 307.9M756.7 330.7L762 324.8L767.3 330.7M750.6 314L756.5 319.3L750.6 324.6M773.4 314L767.5 319.3L773.4 324.6M750.6 835.8H773.4V858.6H750.6ZM756.7 835.8L762 841.7L767.3 835.8M756.7 858.6L762 852.7L767.3 858.6M750.6 841.9L756.5 847.2L750.6 852.5M773.4 841.9L767.5 847.2L773.4 852.5M871.3 307.9H894.1V330.7H871.3ZM877.4 307.9L882.7 313.8L888 307.9M877.4 330.7L882.7 324.8L888 330.7M871.3 314L877.2 319.3L871.3 324.6M894.1 314L888.2 319.3L894.1 324.6M871.3 835.8H894.1V858.6H871.3ZM877.4 835.8L882.7 841.7L888 835.8M877.4 858.6L882.7 852.7L888 858.6M871.3 841.9L877.2 847.2L871.3 852.5M894.1 841.9L888.2 847.2L894.1 852.5M992 307.9H1014.8V330.7H992ZM998.1 307.9L1003.4 313.8L1008.7 307.9M998.1 330.7L1003.4 324.8L1008.7 330.7M992 314L997.9 319.3L992 324.6M1014.8 314L1008.9 319.3L1014.8 324.6M992 835.8H1014.8V858.6H992ZM998.1 835.8L1003.4 841.7L1008.7 835.8M998.1 858.6L1003.4 852.7L1008.7 858.6M992 841.9L997.9 847.2L992 852.5M1014.8 841.9L1008.9 847.2L1014.8 852.5M1112.7 307.9H1135.5V330.7H1112.7ZM1118.8 307.9L1124.1 313.8L1129.4 307.9M1118.8 330.7L1124.1 324.8L1129.4 330.7M1112.7 314L1118.6 319.3L1112.7 324.6M1135.5 314L1129.6 319.3L1135.5 324.6M1112.7 835.8H1135.5V858.6H1112.7ZM1118.8 835.8L1124.1 841.7L1129.4 835.8M1118.8 858.6L1124.1 852.7L1129.4 858.6M1112.7 841.9L1118.6 847.2L1112.7 852.5M1135.5 841.9L1129.6 847.2L1135.5 852.5M1233.4 307.9H1256.2V330.7H1233.4ZM1239.5 307.9L1244.8 313.8L1250.1 307.9M1239.5 330.7L1244.8 324.8L1250.1 330.7M1233.4 314L1239.3 319.3L1233.4 324.6M1256.2 314L1250.3 319.3L1256.2 324.6M1233.4 835.8H1256.2V858.6H1233.4ZM1239.5 835.8L1244.8 841.7L1250.1 835.8M1239.5 858.6L1244.8 852.7L1250.1 858.6M1233.4 841.9L1239.3 847.2L1233.4 852.5M1256.2 841.9L1250.3 847.2L1256.2 852.5M750.6 579.5H773.4V602.3H750.6ZM756.7 579.5L762 585.4L767.3 579.5M756.7 602.3L762 596.4L767.3 602.3M750.6 585.6L756.5 590.9L750.6 596.2M773.4 585.6L767.5 590.9L773.4 596.2M991.9 579.5H1014.7V602.3H991.9ZM998 579.5L1003.3 585.4L1008.6 579.5M998 602.3L1003.3 596.4L1008.6 602.3M991.9 585.6L997.8 590.9L991.9 596.2M1014.7 585.6L1008.8 590.9L1014.7 596.2M1233.5 579.5H1256.3V602.3H1233.5ZM1239.6 579.5L1244.9 585.4L1250.2 579.5M1239.6 602.3L1244.9 596.4L1250.2 602.3M1233.5 585.6L1239.4 590.9L1233.5 596.2M1256.3 585.6L1250.4 590.9L1256.3 596.2M631.2 426.6H653.2V448.8H631.2ZM636.9 426.6L642.2 420.5L647.5 426.6M636.9 448.8L642.2 454.9L647.5 448.8M631.2 432.4L625.1 437.7L631.2 443M653.2 432.4L659.4 437.7L653.2 443M635.5 732.7H657.5V754.8H635.5ZM641.2 732.7L646.5 726.6L651.8 732.7M641.2 754.8L646.5 760.9L651.8 754.8M635.5 738.4L629.4 743.7L635.5 749M657.5 738.4L663.6 743.7L657.5 749M693.7 468.9H709.9V485.1H693.7ZM693.7 695.2H709.9V711.4H693.7ZM751.9 426.6H774V448.8H751.9ZM757.6 426.6L762.9 420.5L768.2 426.6M757.6 448.8L762.9 454.9L768.2 448.8M751.9 432.4L745.8 437.7L751.9 443M774 432.4L780.1 437.7L774 443M756.2 732.7H778.2V754.8H756.2ZM761.9 732.7L767.2 726.6L772.5 732.7M761.9 754.8L767.2 760.9L772.5 754.8M756.2 738.4L750.1 743.7L756.2 749M778.2 738.4L784.4 743.7L778.2 749M814.4 468.9H830.6V485.1H814.4ZM814.4 695.2H830.6V711.4H814.4ZM872.6 426.6H894.6V448.8H872.6ZM878.3 426.6L883.6 420.5L888.9 426.6M878.3 448.8L883.6 454.9L888.9 448.8M872.6 432.4L866.5 437.7L872.6 443M894.6 432.4L900.8 437.7L894.6 443M876.9 732.7H898.9V754.8H876.9ZM882.6 732.7L887.9 726.6L893.2 732.7M882.6 754.8L887.9 760.9L893.2 754.8M876.9 738.4L870.8 743.7L876.9 749M898.9 738.4L905 743.7L898.9 749M935.1 468.9H951.3V485.1H935.1ZM935.1 695.2H951.3V711.4H935.1ZM993.3 426.6H1015.4V448.8H993.3ZM999 426.6L1004.3 420.5L1009.6 426.6M999 448.8L1004.3 454.9L1009.6 448.8M993.3 432.4L987.2 437.7L993.3 443M1015.4 432.4L1021.5 437.7L1015.4 443M997.6 732.7H1019.6V754.8H997.6ZM1003.3 732.7L1008.6 726.6L1013.9 732.7M1003.3 754.8L1008.6 760.9L1013.9 754.8M997.6 738.4L991.5 743.7L997.6 749M1019.6 738.4L1025.8 743.7L1019.6 749M1055.8 468.9H1072V485.1H1055.8ZM1055.8 695.2H1072V711.4H1055.8ZM1114 426.6H1136V448.8H1114ZM1119.7 426.6L1125 420.5L1130.3 426.6M1119.7 448.8L1125 454.9L1130.3 448.8M1114 432.4L1107.9 437.7L1114 443M1136 432.4L1142.1 437.7L1136 443M1118.2 732.7H1140.3V754.8H1118.2ZM1124 732.7L1129.3 726.6L1134.6 732.7M1124 754.8L1129.3 760.9L1134.6 754.8M1118.2 738.4L1112.2 743.7L1118.2 749M1140.3 738.4L1146.4 743.7L1140.3 749M1176.5 468.9H1192.7V485.1H1176.5ZM1176.5 695.2H1192.7V711.4H1176.5ZM1234.7 426.6H1256.8V448.8H1234.7ZM1240.4 426.6L1245.7 420.5L1251 426.6M1240.4 448.8L1245.7 454.9L1251 448.8M1234.7 432.4L1228.6 437.7L1234.7 443M1256.8 432.4L1262.8 437.7L1256.8 443M1239 732.7H1261V754.8H1239ZM1244.7 732.7L1250 726.6L1255.3 732.7M1244.7 754.8L1250 760.9L1255.3 754.8M1239 738.4L1232.9 743.7L1239 749M1261 738.4L1267.1 743.7L1261 749M1297.2 468.9H1313.4V485.1H1297.2ZM1297.2 695.2H1313.4V711.4H1297.2ZM876.4 582H898.4V604H876.4ZM882.1 582L887.4 575.9L892.7 582M882.1 604L887.4 610.1L892.7 604M876.4 587.7L870.2 593L876.4 598.3M898.4 587.7L904.5 593L898.4 598.3M1118.2 582H1140.3V604H1118.2ZM1124 582L1129.3 575.9L1134.6 582M1124 604L1129.3 610.1L1134.6 604M1118.2 587.7L1112.2 593L1118.2 598.3M1140.3 587.7L1146.4 593L1140.3 598.3M358 293.6L364.2 299.8L358 306L351.8 299.8L358 293.6M353.9 299.8A4.1 4.1 0 1 0 362.1 299.8A4.1 4.1 0 1 0 353.9 299.8M418.3 293.6L424.5 299.8L418.3 306L412.1 299.8L418.3 293.6M414.2 299.8A4.1 4.1 0 1 0 422.4 299.8A4.1 4.1 0 1 0 414.2 299.8M523.7 293.6L529.9 299.8L523.7 306L517.5 299.8L523.7 293.6M519.6 299.8A4.1 4.1 0 1 0 527.8 299.8A4.1 4.1 0 1 0 519.6 299.8M358 384L364.2 390.2L358 396.4L351.8 390.2L358 384M353.9 390.2A4.1 4.1 0 1 0 362.1 390.2A4.1 4.1 0 1 0 353.9 390.2M418.3 384L424.5 390.2L418.3 396.4L412.1 390.2L418.3 384M414.2 390.2A4.1 4.1 0 1 0 422.4 390.2A4.1 4.1 0 1 0 414.2 390.2M523.7 384L529.9 390.2L523.7 396.4L517.5 390.2L523.7 384M519.6 390.2A4.1 4.1 0 1 0 527.8 390.2A4.1 4.1 0 1 0 519.6 390.2M358 790.2L364.2 796.4L358 802.6L351.8 796.4L358 790.2M353.9 796.4A4.1 4.1 0 1 0 362.1 796.4A4.1 4.1 0 1 0 353.9 796.4M418.3 790.2L424.5 796.4L418.3 802.6L412.1 796.4L418.3 790.2M414.2 796.4A4.1 4.1 0 1 0 422.4 796.4A4.1 4.1 0 1 0 414.2 796.4M523.7 790.2L529.9 796.4L523.7 802.6L517.5 796.4L523.7 790.2M519.6 796.4A4.1 4.1 0 1 0 527.8 796.4A4.1 4.1 0 1 0 519.6 796.4M358 880.7L364.2 886.9L358 893.1L351.8 886.9L358 880.7M353.9 886.9A4.1 4.1 0 1 0 362.1 886.9A4.1 4.1 0 1 0 353.9 886.9M418.3 880.7L424.5 886.9L418.3 893.1L412.1 886.9L418.3 880.7M414.2 886.9A4.1 4.1 0 1 0 422.4 886.9A4.1 4.1 0 1 0 414.2 886.9M523.7 880.7L529.9 886.9L523.7 893.1L517.5 886.9L523.7 880.7M519.6 886.9A4.1 4.1 0 1 0 527.8 886.9A4.1 4.1 0 1 0 519.6 886.9M523.7 474.9L529.9 481.1L523.7 487.3L517.5 481.1L523.7 474.9M519.6 481.1A4.1 4.1 0 1 0 527.8 481.1A4.1 4.1 0 1 0 519.6 481.1M523.7 699.3L529.9 705.5L523.7 711.7L517.5 705.5L523.7 699.3M519.6 705.5A4.1 4.1 0 1 0 527.8 705.5A4.1 4.1 0 1 0 519.6 705.5" fill="none" stroke="#d0d0d2" stroke-width="1.3"/><path d="M483.1 338.9H499.7V351.1H483.1ZM491.4 338.9V345.6M485.8 345V351.1M497 345V351.1M483.1 349.5H499.7M482.3 835.2H499.3V847.8H482.3ZM490.8 835.2V842.1M485 841.5V847.8M496.6 841.5V847.8M482.3 846.2H499.3M482.3 474.6H499.3V487.2H482.3ZM490.8 474.6V481.5M485 480.9V487.2M496.6 480.9V487.2M482.3 485.6H499.3M480 699.2H497V711.8H480ZM488.5 699.2V706.1M482.7 705.5V711.8M494.3 705.5V711.8M480 710.2H497M1340 504.6H1356.8V517.1H1340ZM1348.4 504.6V511.5M1342.7 510.9V517.1M1354.1 510.9V517.1M1340 515.5H1356.8M1346.6 670.4H1363.8V683.3H1346.6ZM1355.2 670.4V677.5M1349.4 676.8V683.3M1361 676.8V683.3M1346.6 681.7H1363.8M1263.2 885.7H1289.7V905.2H1263.2ZM1276.5 885.7V896.4M1267.4 895.5V905.2M1285.5 895.5V905.2M1263.2 903.6H1289.7M381.8 567.5H394.5V584H381.8ZM381.8 570H389.2M381.8 581.5H389.2M387.5 575.8H394.5M383.3 567.5V584M442.3 549.1H454.8V566.1H442.3ZM447.6 551.6H454.8M447.6 563.6H454.8M442.3 557.6H449.2M453.3 549.1V566.1M442.3 613.1H454.8V630.1H442.3ZM447.6 615.6H454.8M447.6 627.6H454.8M442.3 621.6H449.2M453.3 613.1V630.1M393.5 654.9H404.9V662.1H393.5ZM395 656.1L403.4 660.9M403.4 656.1L395 660.9M393.5 685.2H404.9V692.8H393.5ZM395 686.4L403.4 691.6M403.4 686.4L395 691.6M1392.3 813.5H1405.9V821.3H1392.3ZM1393.8 814.7L1404.4 820.1M1404.4 814.7L1393.8 820.1M1285 368.1H1299.8V382.6H1285ZM1285.8 369.1L1299.3 372.1M1285.8 381.6L1299.3 378.6M1287.6 374.5H1289.8V376.2H1287.6ZM1285 381.1H1299.8M1276 504H1290V518.6H1276ZM1276.8 508.8L1289.5 505.6M1276.8 513.8L1289.5 517M1285 510.4H1287.2V512.2H1285ZM1276 517.1H1290M1285.2 549.1H1299.9V563.8H1285.2ZM1286 550.1L1299.4 553.1M1286 562.8L1299.4 559.8M1287.8 555.6H1290V557.4H1287.8ZM1285.2 562.3H1299.9M1290.1 669.6H1304.5V684H1290.1ZM1290.9 670.6L1304 673.6M1290.9 683L1304 680M1292.7 675.9H1294.9V677.7H1292.7ZM1290.1 682.5H1304.5M1301 790.5H1315.4V805H1301ZM1301.8 791.5L1314.9 794.5M1301.8 804L1314.9 801M1303.6 796.9H1305.8V798.6H1303.6ZM1301 803.5H1315.4M323.1 450.7A4.8 4.8 0 1 0 332.7 450.7A4.8 4.8 0 1 0 323.1 450.7M325 447.8L330.8 453.6M330.8 447.8L325 453.6M383.3 440.5A4.8 4.8 0 1 0 392.9 440.5A4.8 4.8 0 1 0 383.3 440.5M385.2 437.6L391 443.4M391 437.6L385.2 443.4M323.1 496A4.8 4.8 0 1 0 332.7 496A4.8 4.8 0 1 0 323.1 496M325 493.1L330.8 498.9M330.8 493.1L325 498.9M343.8 677A4.6 4.6 0 1 0 353 677A4.6 4.6 0 1 0 343.8 677M345 674L350.6 675.5M345 680L350.6 678.5M350.8 675.1A0.9 1.9 0 1 0 350.8 678.9A0.9 1.9 0 1 0 350.8 675.1M343.8 708.9A4.6 4.6 0 1 0 353 708.9A4.6 4.6 0 1 0 343.8 708.9M351.8 705.9L346.2 707.4M351.8 711.9L346.2 710.4M346 707A0.9 1.9 0 1 0 346 710.8A0.9 1.9 0 1 0 346 707M1189.8 895.4A8.4 8.4 0 1 0 1206.6 895.4A8.4 8.4 0 1 0 1189.8 895.4M1204 889.5L1191 893.2M1204 901.3L1191 897.6M1391.1 758.9A7.8 7.8 0 1 0 1406.7 758.9A7.8 7.8 0 1 0 1391.1 758.9M1393.3 753.6L1397.2 765.5M1404.5 753.6L1400.6 765.5M293.5 669.2H304.4V684.8H293.5ZM295 674.7L302.5 671.7M295 677.6L302.5 674.6M295 680.5L302.5 677.5M295 683.4L302.5 680.4M293.5 701.5H304.4V717.1H293.5ZM295 707L302.5 704M295 709.9L302.5 706.9M295 712.8L302.5 709.8M295 715.7L302.5 712.7M1392.3 872H1405.9V883H1392.3ZM1392.3 875H1405.9M1392.3 878H1405.9M1394.5 872L1396.5 869.5L1401.5 869.5L1403.5 872" fill="#22282f" stroke="#d0d0d2" stroke-width="1.3"/><text x="377.3" y="276.98" font-size="10.5" textLength="24.5" lengthAdjust="spacingAndGlyphs" text-anchor="middle" fill="#a9acb0">Büro 1</text><text x="506" y="276.98" font-size="10.5" textLength="24.5" lengthAdjust="spacingAndGlyphs" text-anchor="middle" fill="#a9acb0">Büro 2</text><text x="377.6" y="907.98" font-size="10.5" textLength="24.8" lengthAdjust="spacingAndGlyphs" text-anchor="middle" fill="#a9acb0">Büro 3</text><text x="509.4" y="907.98" font-size="10.5" textLength="24.8" lengthAdjust="spacingAndGlyphs" text-anchor="middle" fill="#a9acb0">Büro 4</text><text x="340" y="442.22" font-size="9.5" textLength="37.6" lengthAdjust="spacingAndGlyphs" text-anchor="middle" fill="#a9acb0">WC-Herren</text><text x="340.2" y="534.92" font-size="9.5" textLength="38" lengthAdjust="spacingAndGlyphs" text-anchor="middle" fill="#a9acb0">WC-Damen</text><text x="399.9" y="481.02" font-size="9.5" textLength="43.5" lengthAdjust="spacingAndGlyphs" text-anchor="middle" fill="#a9acb0" transform="rotate(-90 399.9 477.6)">WC-Vorraum</text><text x="411.6" y="569.68" font-size="10.5" textLength="12.8" lengthAdjust="spacingAndGlyphs" text-anchor="middle" fill="#a9acb0">Flur</text><text x="362.2" y="696.92" font-size="9.5" textLength="39.5" lengthAdjust="spacingAndGlyphs" text-anchor="middle" fill="#a9acb0">Abstellraum</text><text x="1004.5" y="633" font-size="10" textLength="31" lengthAdjust="spacingAndGlyphs" text-anchor="middle" fill="#a9acb0">Werkstatt</text><path d="M635.5 581.5H657.5V603.5H635.5ZM641.2 581.5L646.5 575.4L651.8 581.5M641.2 603.5L646.5 609.6L651.8 603.5M635.5 587.2L629.4 592.5L635.5 597.8M657.5 587.2L663.6 592.5L657.5 597.8" fill="none" stroke="#2f6fe0" stroke-width="4" opacity="0.55"/><rect x="634.9" y="580.9" width="23.200" height="23.200" fill="#0a84ff"/><path d="M635.5 581.5H657.5V603.5H635.5ZM641.2 581.5L646.5 575.4L651.8 581.5M641.2 603.5L646.5 609.6L651.8 603.5M635.5 587.2L629.4 592.5L635.5 597.8M657.5 587.2L663.6 592.5L657.5 597.8" fill="none" stroke="#cfe0ff" stroke-width="1.100"/><text x="285" y="185.600" font-size="10.500" fill="#0c0f14" stroke="#0c0f14" stroke-width="0.450" textLength="133" lengthAdjust="spacingAndGlyphs">[−][Oben][2D-Drahtkörper]</text><rect x="1499.200" y="182.800" width="9" height="2.600" fill="#e8eaee"/><path d="M1518.500 180.500H1525.500V187.500H1518.500Z" fill="none" stroke="#e8eaee" stroke-width="1.500"/><path d="M1520.500 180V178.300H1527.500V185.300H1526" fill="none" stroke="#e8eaee" stroke-width="1.200"/><path d="M1536.500 178.800L1544 186.300M1544 178.800L1536.500 186.300" stroke="#f0f2f5" stroke-width="2"/><circle cx="1479" cy="266.800" r="49" fill="none" stroke="#989da8" stroke-opacity="0.330" stroke-width="12"/><rect x="1455.200" y="243" width="47.700" height="47.200" fill="#a7aab0"/><rect x="1464.200" y="252.100" width="30.100" height="29" fill="#a6acbf"/><text x="1479.200" y="271.300" font-size="14" font-weight="bold" fill="#414858" text-anchor="middle" textLength="28.800" lengthAdjust="spacingAndGlyphs">OBEN</text><text x="1479" y="221.6" font-size="19.500" font-weight="bold" fill="#b2b5ba" text-anchor="middle">N</text><text x="1479" y="327" font-size="19.500" font-weight="bold" fill="#b2b5ba" text-anchor="middle">S</text><text x="1427.2" y="273.8" font-size="19.500" font-weight="bold" fill="#b2b5ba" text-anchor="middle">W</text><text x="1530.6" y="273.8" font-size="19.500" font-weight="bold" fill="#b2b5ba" text-anchor="middle">O</text><rect x="1457" y="347.800" width="43" height="15.600" rx="3.500" fill="#8c8fa3"/><text x="1461" y="358.900" font-size="9.800" fill="#62667a" textLength="21" lengthAdjust="spacingAndGlyphs">WKS</text><path d="M1489 353H1496L1492.500 357Z" fill="none" stroke="#a8abbb" stroke-width="0.900"/><path d="M300.500 850V896.800H347.200M296.400 892H305.400V901H296.400Z" fill="none" stroke="#dcdcdc" stroke-width="1.100"/><path d="M302.500 833L308 839.500L313.500 833M308 839.500V846" fill="none" stroke="#dcdcdc" stroke-width="1.100"/><path d="M351.500 883.500L363 895.500M363 883.500L351.500 895.500" fill="none" stroke="#dcdcdc" stroke-width="1.100"/><path d="M1088.100 632.800H1124.200M1141.600 632.800H1178M1132.900 588V624.300M1132.900 641.500V676.900M1124.200 624.300H1141.600V641.500H1124.200Z" fill="none" stroke="#d4d4d4" stroke-width="1.400"/><circle cx="1145.500" cy="619.500" r="3.300" fill="#f4f4f4"/><path d="M1143.500 619.500H1147.500M1145.500 617.500V621.500" stroke="#222" stroke-width="0.900"/></svg><div class="a" style="left:1556.5px;top:168.5px;width:221.5px;height:802px;background:#4b5468;"></div><div class="a" style="left:1557px;top:170px;width:221px;height:28.5px;background:#222933;"></div><svg style="left:1565px;top:177px" width="13" height="13" viewBox="0 0 13 13"><path d="M1 4L4.500 1.500V12H1Z" fill="#e8e8e8"/><path d="M6 1.500Q11.500 1 11.500 5V12H8.500V5.500Q8.500 4 6 4Z" fill="#e8e8e8"/></svg><span class="t" style="left:1582.0px;top:176px;font-size:12px;transform:scaleX(0.854);color:#f0f2f5;">LINEAR</span><div class="a" style="left:1600px;top:198px;width:178px;height:31.5px;background:#222933;"></div><div class="a" style="left:1557px;top:198px;width:43px;height:1.5px;background:#a4a8b0;"></div><svg style="left:1568px;top:206px" width="21" height="17"><path d="M0 2.800H21M0 9.200H21M0 15.500H21" stroke="#f0f0f0" stroke-width="2.600"/></svg><svg style="left:1611px;top:203px" width="23" height="23" viewBox="0 0 23 23"><path d="M12 4H1.500V21.500H19V11" fill="none" stroke="#f0f0f0" stroke-width="1.600"/><path d="M7 16L8 12L18.500 1.500L21.500 4.500L11 15Z" fill="none" stroke="#f0f0f0" stroke-width="1.500"/></svg><svg style="left:1656px;top:203px" width="18" height="23" viewBox="0 0 18 23"><rect x="1" y="1" width="16" height="21" fill="none" stroke="#f0f0f0" stroke-width="1.600"/><rect x="3.500" y="3.500" width="11" height="4.500" fill="#f0f0f0"/><rect x="3.5" y="10.5" width="2.800" height="2.800" fill="#f0f0f0"/><rect x="7.6" y="10.5" width="2.800" height="2.800" fill="#f0f0f0"/><rect x="11.7" y="10.5" width="2.800" height="2.800" fill="#f0f0f0"/><rect x="3.5" y="14.3" width="2.800" height="2.800" fill="#f0f0f0"/><rect x="7.6" y="14.3" width="2.800" height="2.800" fill="#f0f0f0"/><rect x="11.7" y="14.3" width="2.800" height="2.800" fill="#f0f0f0"/><rect x="3.5" y="18.1" width="2.800" height="2.800" fill="#f0f0f0"/><rect x="7.6" y="18.1" width="2.800" height="2.800" fill="#f0f0f0"/><rect x="11.7" y="18.1" width="2.800" height="2.800" fill="#f0f0f0"/></svg><svg style="left:1700px;top:203px" width="19" height="23" viewBox="0 0 19 23"><path d="M1 1H11L18 8V22H1Z" fill="none" stroke="#f0f0f0" stroke-width="1.600"/><path d="M11 1V8H18Z" fill="#f0f0f0"/></svg><svg style="left:1743px;top:204px" width="22" height="22" viewBox="0 0 22 22"><path d="M1 6V1H6M16 1H21V6M21 16V21H16M6 21H1V16" fill="none" stroke="#f0f0f0" stroke-width="1.600"/><circle cx="6" cy="11" r="1.600" fill="#f0f0f0"/><circle cx="11" cy="11" r="1.600" fill="#f0f0f0"/><circle cx="16" cy="11" r="1.600" fill="#f0f0f0"/></svg><span class="t" style="left:1567.0px;top:234px;font-size:12px;transform:scaleX(0.910);color:#f0f2f5;">Projekt</span><div class="a" style="left:1567px;top:252px;width:200px;height:686.5px;background:#343b49;"></div><div class="a" style="left:1573px;top:299px;width:188px;height:299.6px;background:#3b4453;"></div><div class="a" style="left:1573px;top:623.4px;width:188px;height:79.6px;background:#3b4453;"></div><svg style="left:1573px;top:257px" width="16" height="15" viewBox="0 0 16 15"><rect x="0.500" y="0.500" width="4" height="14" fill="#e8e8e8"/><rect x="6" y="0.500" width="9.500" height="14" fill="#e8e8e8"/><path d="M6 0.500L10.700 5L15.500 0.500" fill="none" stroke="#555" stroke-width="1"/><rect x="9" y="8.500" width="6" height="5.500" fill="#46a6f2"/></svg><span class="t" style="left:1592.0px;top:258px;font-size:12px;transform:scaleX(0.912);color:#f0f2f5;">Projektinformationen ...</span><svg style="left:1573px;top:279.500px" width="16" height="15" viewBox="0 0 16 15"><rect x="0.500" y="0.500" width="15" height="14" fill="#f0f0f0"/><path d="M2.500 3.500H4.500" stroke="#e04040" stroke-width="1.600"/><path d="M6 3.500H13.500" stroke="#e04040" stroke-width="1.200"/><path d="M2.500 7.500H4.500" stroke="#40a040" stroke-width="1.600"/><path d="M6 7.500H13.500" stroke="#40a040" stroke-width="1.200"/><path d="M2.500 11.500H4.500" stroke="#4060e0" stroke-width="1.600"/><path d="M6 11.500H13.500" stroke="#4060e0" stroke-width="1.200"/></svg><span class="t" style="left:1592.0px;top:280px;font-size:12px;transform:scaleX(0.890);color:#f0f2f5;">Disziplinen ...</span><svg style="left:1750.5px;top:285.4px" width="8" height="4.2"><path d="M0 4.2H8L4 0Z" fill="#f0f2f5"/></svg><svg style="left:1575px;top:299.8px" width="11" height="16" viewBox="0 0 11 16"><path d="M5.500 0.600A4.700 4.700 0 0 1 8.600 8.800L7.600 10.800H3.400L2.400 8.800A4.700 4.700 0 0 1 5.500 0.600Z" fill="#5a5c58" stroke="#d8d4b8" stroke-width="0.900"/><path d="M5.500 1.500A3.800 3.800 0 0 1 7.800 8.300L7.200 9.800H5.500Z" fill="#2e3138"/><path d="M4.600 3L6 5.200L4.800 5.400L6.200 8" fill="none" stroke="#f0d840" stroke-width="1.300"/><path d="M3.600 11.700H7.400M3.600 13.200H7.400M4.200 14.700H6.800" stroke="#4cc0c8" stroke-width="1"/></svg><span class="t" style="left:1591.5px;top:299px;font-size:11.5px;transform:scaleX(0.892);color:#f2f4f7;">Architektur</span><span class="t" style="left:1591.5px;top:315px;font-size:11.5px;transform:scaleX(0.830);color:#f2f4f7;">Heizung</span><span class="t" style="left:1591.5px;top:331px;font-size:11.5px;transform:scaleX(0.853);color:#f2f4f7;">Trinkwasser</span><span class="t" style="left:1591.5px;top:347px;font-size:11.5px;transform:scaleX(0.852);color:#f2f4f7;">Abwasser</span><div class="a" style="left:1589px;top:362.48px;width:171px;height:15.6px;background:#4e596c;"></div><svg style="left:1575px;top:362.78px" width="11" height="16" viewBox="0 0 11 16"><path d="M5.500 0.600A4.700 4.700 0 0 1 8.600 8.800L7.600 10.800H3.400L2.400 8.800A4.700 4.700 0 0 1 5.500 0.600Z" fill="#f5e34a" stroke="#d8d4b8" stroke-width="0.900"/><circle cx="5.500" cy="4.800" r="2" fill="#fdf6b0"/><path d="M3.600 11.700H7.400M3.600 13.200H7.400M4.200 14.700H6.800" stroke="#4cc0c8" stroke-width="1"/></svg><span class="t" style="left:1591.5px;top:362px;font-size:11.5px;transform:scaleX(0.892);color:#f2f4f7;">Lüftung (3D)</span><span class="t" style="left:1591.5px;top:378px;font-size:11.5px;transform:scaleX(0.865);color:#f2f4f7;">Flächentemperierung</span><span class="t" style="left:1591.5px;top:394px;font-size:11.5px;transform:scaleX(0.840);color:#f2f4f7;">Kälte</span><span class="t" style="left:1591.5px;top:410px;font-size:11.5px;transform:scaleX(0.759);color:#f2f4f7;">Gas</span><span class="t" style="left:1591.5px;top:425px;font-size:11.5px;transform:scaleX(0.861);color:#f2f4f7;">Brandschutz</span><span class="t" style="left:1591.5px;top:441px;font-size:11.5px;transform:scaleX(0.866);color:#f2f4f7;">Elektro</span><span class="t" style="left:1591.5px;top:457px;font-size:11.5px;transform:scaleX(0.874);color:#f2f4f7;">Dachentwässerung</span><span class="t" style="left:1591.5px;top:472px;font-size:11.5px;transform:scaleX(0.856);color:#f2f4f7;">Schlitz- und Durchbruchsplanung</span><span class="t" style="left:1591.5px;top:488px;font-size:11.5px;transform:scaleX(0.843);color:#f2f4f7;">Befestigungsplanung</span><span class="t" style="left:1578.0px;top:504px;font-size:11.5px;transform:scaleX(0.869);color:#f2f4f7;">Planungstyp</span><div class="a" style="left:1589px;top:519.9px;width:171px;height:15.6px;background:#4e596c;"></div><span class="t" style="left:1591.5px;top:520px;font-size:11.5px;transform:scaleX(0.847);color:#f2f4f7;">3D - Grundrissplanung</span><span class="t" style="left:1591.5px;top:535px;font-size:11.5px;transform:scaleX(0.847);color:#f2f4f7;">2D - Grundrissplanung</span><span class="t" style="left:1591.5px;top:551px;font-size:11.5px;transform:scaleX(0.843);color:#f2f4f7;">2D - Schemaplanung</span><span class="t" style="left:1591.5px;top:567px;font-size:11.5px;transform:scaleX(0.856);color:#f2f4f7;">2D - Detailplanung</span><span class="t" style="left:1591.5px;top:583px;font-size:11.5px;transform:scaleX(0.878);color:#f2f4f7;">3D - Modellplanung</span><svg style="left:1573px;top:604px" width="16" height="16" viewBox="0 0 16 16"><path d="M1 6L4 1.500H12L15 6V15H1Z" fill="#46a6f2" stroke="#e8f2fc" stroke-width="1"/><path d="M1 6H15M1 9H15M1 12H15" stroke="#e8f2fc" stroke-width="1"/></svg><span class="t" style="left:1592.0px;top:605px;font-size:12px;transform:scaleX(0.832);color:#f0f2f5;">Geschosse ...</span><svg style="left:1750.5px;top:609.9px" width="8" height="4.2"><path d="M0 4.2H8L4 0Z" fill="#f0f2f5"/></svg><div class="a" style="left:1589px;top:624.5px;width:171px;height:15.6px;background:#4e596c;"></div><svg style="left:1575px;top:625px" width="11" height="16" viewBox="0 0 11 16"><path d="M5.500 0.600A4.700 4.700 0 0 1 8.600 8.800L7.600 10.800H3.400L2.400 8.800A4.700 4.700 0 0 1 5.500 0.600Z" fill="#5a5c58" stroke="#d8d4b8" stroke-width="0.900"/><path d="M5.500 1.500A3.800 3.800 0 0 1 7.800 8.300L7.200 9.800H5.500Z" fill="#2e3138"/><path d="M4.600 3L6 5.200L4.800 5.400L6.200 8" fill="none" stroke="#f0d840" stroke-width="1.300"/><path d="M3.600 11.700H7.400M3.600 13.200H7.400M4.200 14.700H6.800" stroke="#4cc0c8" stroke-width="1"/></svg><span class="t" style="left:1591.5px;top:625px;font-size:11.5px;transform:scaleX(0.835);color:#f2f4f7;">Erdgeschoss</span><svg style="left:1573px;top:709px" width="16" height="16" viewBox="0 0 16 16"><rect x="0.600" y="0.600" width="5" height="3.400" fill="none" stroke="#eeeeee" stroke-width="1.100"/><path d="M3 4V12.500H10.500M3 7.200H10.500" fill="none" stroke="#eeeeee" stroke-width="1.100"/><rect x="10.500" y="5.200" width="4.500" height="3.800" fill="#5bbcf8"/><rect x="10.500" y="10.600" width="4.500" height="3.800" fill="#5bbcf8"/></svg><span class="t" style="left:1592.0px;top:709px;font-size:12px;transform:scaleX(0.881);color:#f0f2f5;">Anlagen ...</span><svg style="left:1750.5px;top:714.4px" width="8" height="4.2"><path d="M0 0H8L4 4.2Z" fill="#f0f2f5"/></svg><svg style="left:1573px;top:731px" width="16" height="16" viewBox="0 0 16 16"><path d="M0.500 14.500V6.500L6.500 1Q8.500 0 9.500 2L12.500 8.500Q15.500 9 15.300 12Q15 14.500 12.500 14.500Z" fill="#ececec"/><circle cx="12" cy="11.600" r="1.700" fill="none" stroke="#8a8e96" stroke-width="0.900"/><path d="M6.500 1L10.500 10" stroke="#b8bbc0" stroke-width="0.800" fill="none"/></svg><span class="t" style="left:1592.0px;top:732px;font-size:12px;transform:scaleX(0.899);color:#f0f2f5;">Partitionen ...</span><svg style="left:1750.5px;top:736.9px" width="8" height="4.2"><path d="M0 0H8L4 4.2Z" fill="#f0f2f5"/></svg><svg style="left:1573px;top:753px" width="17" height="16" viewBox="0 0 17 16"><path d="M0.500 3.500H15.500V11L11.500 15.500H0.500Z" fill="#f0f0f0"/><path d="M11.500 15.500V11H15.500Z" fill="#b8bbc0"/><path d="M2.500 8.500H13M2.500 11H9.500M2.500 13.300H9.500" stroke="#3a4150" stroke-width="1.100"/><path d="M3.500 6.500V2Q3.500 0.500 5 0.500Q6.500 0.500 6.500 2V5.500Q6.500 6.300 5.800 6.300Q5 6.300 5 5.500V2.500" fill="none" stroke="#3a4150" stroke-width="0.900"/><path d="M7.500 5.500H12.500" stroke="#3a4150" stroke-width="1.100"/></svg><span class="t" style="left:1592.0px;top:754px;font-size:12px;transform:scaleX(0.868);color:#f0f2f5;">Memo ...</span><svg style="left:1566px;top:946px" width="16" height="15" viewBox="0 0 16 15"><rect x="0.500" y="0.500" width="15" height="14" fill="#f0f0f0"/><rect x="1.500" y="4" width="5.500" height="9.500" fill="#46a6f2"/><rect x="8" y="4" width="6.500" height="9.500" fill="#3b4453"/></svg><svg style="left:1588px;top:946px" width="17" height="15" viewBox="0 0 17 15"><path d="M4 3H14L11 6H1Z" fill="#e8e8e8"/><path d="M1 9H11L14 6M1 12H11L14 9" fill="none" stroke="#e8e8e8" stroke-width="1.300"/><path d="M13 6L9.500 10.500H12L10.500 14.500L15.500 9H12.800L14.500 6Z" fill="#f0c040"/></svg><svg style="left:1611px;top:946px" width="15" height="15" viewBox="0 0 15 15"><path d="M0.500 0.500H14.500L9 7V14.500H6V7Z" fill="#f0f0f0"/></svg><svg style="left:1707px;top:945.500px" width="16" height="16" viewBox="0 0 16 16"><circle cx="8" cy="8" r="4.200" fill="none" stroke="#f0f0f0" stroke-width="2.600"/><path d="M8 0.500V3M8 13V15.500M0.500 8H3M13 8H15.500M2.700 2.700L4.500 4.500M11.500 11.500L13.300 13.300M2.700 13.300L4.500 11.500M11.500 4.500L13.300 2.700" stroke="#f0f0f0" stroke-width="2.200"/></svg><svg style="left:1729.500px;top:945.500px" width="16" height="16" viewBox="0 0 16 16"><circle cx="8" cy="8" r="7.500" fill="#f0f0f0"/><text x="8" y="12.300" font-family="Liberation Sans,sans-serif" font-weight="bold" font-size="12" fill="#3b4453" text-anchor="middle">?</text></svg><svg style="left:1751.500px;top:945.500px" width="16" height="16" viewBox="0 0 16 16"><circle cx="8" cy="8" r="7.500" fill="#f0f0f0"/><text x="8" y="12.500" font-family="Liberation Serif,serif" font-weight="bold" font-size="12.500" fill="#3b4453" text-anchor="middle">i</text></svg><svg style="left:14.500px;top:147.500px" width="15.500" height="13"><path d="M0 1.300H15.500M0 6.300H15.500M0 11.300H15.500" stroke="#e4e6ea" stroke-width="1.700"/></svg><svg style="left:38px;top:145px" width="9" height="17"><path d="M7.500 0.500L1.500 16.500" stroke="#4a5262" stroke-width="1.200"/></svg><span class="t" style="left:53.5px;top:146px;font-size:12px;transform:scaleX(0.888);color:#e8eaee;">Start</span><svg style="left:80px;top:142.500px" width="205" height="22.500"><path d="M11.800 0H202.300L193.300 22.500H2.800Z" fill="#3b4453"/></svg><span class="t" style="left:98.5px;top:146px;font-size:12px;transform:scaleX(0.930);color:#ffffff;font-weight:bold;">L-03_Werkstatt-mit-Büro_GR*</span><svg style="left:263px;top:149.500px" width="9" height="9"><path d="M1 1L8 8M8 1L1 8" stroke="#9aa0ab" stroke-width="1.600"/></svg><svg style="left:290px;top:147px" width="14" height="14"><path d="M7 0.500V13.500M0.500 7H13.500" stroke="#f0f2f5" stroke-width="1.800"/></svg><svg style="left:312px;top:145px" width="9" height="17"><path d="M7.500 0.500L1.500 16.500" stroke="#4a5262" stroke-width="1.200"/></svg><div class="a" style="left:304.2px;top:920.3px;width:1251.3px;height:28.7px;background:#c9c9c9;"></div><div class="a" style="left:304.2px;top:950px;width:1251.3px;height:18.8px;background:#ffffff;"></div><span class="t" style="left:306.500px;top:919.200px;font-family:'DejaVu Sans Mono','Liberation Mono',monospace;font-size:10.700px;color:#1c1c1c;-webkit-text-stroke:0.350px #1c1c1c;transform:none;">Befehl: *Abbruch*</span><span class="t" style="left:306.500px;top:932.900px;font-family:'DejaVu Sans Mono','Liberation Mono',monospace;font-size:10.700px;color:#1c1c1c;-webkit-text-stroke:0.350px #1c1c1c;transform:none;">Befehl:</span><span class="t" style="left:338.300px;top:952.200px;font-family:'DejaVu Sans Mono','Liberation Mono',monospace;font-size:10.700px;color:#8a8a8a;font-style:italic;transform:none;">Befehl eingeben</span><svg style="left:285px;top:924.500px" width="17" height="5"><path d="M0 1H17M0 4H17" stroke="#e0e2e6" stroke-width="1.300" stroke-dasharray="1.400 0.900"/></svg><svg style="left:288px;top:936.500px" width="9" height="9"><path d="M0.800 0.800L8.200 8.200M8.200 0.800L0.800 8.200" stroke="#f0f2f5" stroke-width="1.700"/></svg><svg style="left:286.500px;top:955.500px" width="13" height="13" viewBox="0 0 13 13"><path d="M1.500 11.500L7 6" stroke="#f0f2f5" stroke-width="2.400" stroke-linecap="round"/><path d="M12.300 3.200A3.300 3.300 0 1 1 9.400 0.500L8.300 2.700L10 4.400Z" fill="#f0f2f5"/></svg><svg style="left:308px;top:953.500px" width="16" height="12" viewBox="0 0 16 12"><rect x="0.500" y="0.500" width="14" height="11" rx="1" fill="#f4f4f4" stroke="#7a7a7a" stroke-width="1"/><path d="M2.500 4L4.500 6L2.500 8M5.500 8.500H8.500" fill="none" stroke="#444" stroke-width="0.900"/></svg><svg style="left:325.5px;top:957.75px" width="6" height="3.5"><path d="M0 0H6L3 3.5Z" fill="#555"/></svg><div class="a" style="left:0px;top:972.7px;width:1778px;height:27.3px;background:#222933;"></div><svg style="left:14.800px;top:978.500px" width="15.500" height="13"><path d="M0 1.300H15.500M0 6.200H15.500M0 11.100H15.500" stroke="#e4e6ea" stroke-width="1.700"/></svg><svg style="left:36px;top:972.700px" width="72" height="22.500"><path d="M10.400 0H68.600L60.200 22.300H2.500Z" fill="#3b4453"/></svg><span class="t" style="left:54.0px;top:978px;font-size:12px;transform:scaleX(0.924);color:#ffffff;font-weight:bold;">Modell</span><span class="t" style="left:111.4px;top:978px;font-size:12px;transform:scaleX(0.888);color:#e8eaee;">Layout1</span><svg style="left:157px;top:976.500px" width="8" height="17"><path d="M6.800 0.500L1 16.500" stroke="#4a5262" stroke-width="1.200"/></svg><svg style="left:174px;top:978.500px" width="13" height="13"><path d="M6.500 0V13M0 6.500H13" stroke="#f0f2f5" stroke-width="1.800"/></svg><svg style="left:196px;top:976.500px" width="8" height="17"><path d="M6.800 0.500L1 16.500" stroke="#4a5262" stroke-width="1.200"/></svg><div class="a" style="left:751.1px;top:974.7px;width:166.4px;height:22.6px;background:#2e3643;"></div><div class="a" style="left:920.5px;top:974.7px;width:47.7px;height:22.6px;background:#2e3643;"></div><div class="a" style="left:972px;top:974.7px;width:59.5px;height:22.6px;background:#2e3643;"></div><div class="a" style="left:1034.8px;top:974.7px;width:21.7px;height:22.6px;background:#4b8fd6;"></div><div class="a" style="left:1058.5px;top:974.7px;width:60.5px;height:22.6px;background:#2e3643;"></div><div class="a" style="left:1119.8px;top:974.7px;width:19.7px;height:22.6px;background:#2e3643;"></div><div class="a" style="left:1141.3px;top:974.7px;width:19.9px;height:22.6px;background:#4b8fd6;"></div><div class="a" style="left:1161.2px;top:974.7px;width:16.3px;height:22.6px;background:#2e3643;"></div><div class="a" style="left:1179.5px;top:974.7px;width:20.5px;height:22.6px;background:#2e3643;"></div><div class="a" style="left:1202px;top:974.7px;width:22.5px;height:22.6px;background:#2e3643;"></div><div class="a" style="left:1226.8px;top:974.7px;width:19.7px;height:22.6px;background:#4b8fd6;"></div><div class="a" style="left:1249px;top:974.7px;width:20.6px;height:22.6px;background:#4b8fd6;"></div><div class="a" style="left:1271.5px;top:974.7px;width:54px;height:22.6px;background:#2e3643;"></div><div class="a" style="left:1327px;top:974.7px;width:38px;height:22.6px;background:#2e3643;"></div><div class="a" style="left:1366.5px;top:974.7px;width:18.5px;height:22.6px;background:#2e3643;"></div><div class="a" style="left:1387px;top:974.7px;width:62px;height:22.6px;background:#2e3643;"></div><div class="a" style="left:1451px;top:974.7px;width:79px;height:22.6px;background:#2e3643;"></div><div class="a" style="left:1532px;top:974.7px;width:66px;height:22.6px;background:#2e3643;"></div><div class="a" style="left:1600px;top:974.7px;width:22px;height:22.6px;background:#2e3643;"></div><div class="a" style="left:1628px;top:974.7px;width:20px;height:22.6px;background:#4b8fd6;"></div><div class="a" style="left:1653.5px;top:974.7px;width:20px;height:22.6px;background:#4b8fd6;"></div><div class="a" style="left:1675.5px;top:974.7px;width:24.5px;height:22.6px;background:#2e3643;"></div><div class="a" style="left:1702px;top:974.7px;width:24px;height:22.6px;background:#2e3643;"></div><div class="a" style="left:1729px;top:974.7px;width:23px;height:22.6px;background:#2e3643;"></div><div class="a" style="left:1754px;top:974.7px;width:24px;height:22.6px;background:#2e3643;"></div><span class="t" style="left:770.2px;top:978px;font-size:12px;transform:scaleX(0.912);color:#f0f2f5;">45712.535, 10625.199, 0.000</span><span class="t" style="left:923.5px;top:978px;font-size:12px;transform:scaleX(0.841);color:#f0f2f5;">MODELL</span><svg style="left:976.3px;top:979px" width="14" height="14" viewBox="0 0 14 14"><path d="M4 0V14M10 0V14M0 4H14M0 10H14" stroke="#e8eaee" stroke-width="1.300"/></svg><svg style="left:999.6px;top:980px" width="12" height="12" viewBox="0 0 12 12"><rect x="0.5" y="0.5" width="1.700" height="1.700" fill="#e8eaee"/><rect x="5.1" y="0.5" width="1.700" height="1.700" fill="#e8eaee"/><rect x="9.7" y="0.5" width="1.700" height="1.700" fill="#e8eaee"/><rect x="0.5" y="5.1" width="1.700" height="1.700" fill="#e8eaee"/><rect x="5.1" y="5.1" width="1.700" height="1.700" fill="#e8eaee"/><rect x="9.7" y="5.1" width="1.700" height="1.700" fill="#e8eaee"/><rect x="0.5" y="9.7" width="1.700" height="1.700" fill="#e8eaee"/><rect x="5.1" y="9.7" width="1.700" height="1.700" fill="#e8eaee"/><rect x="9.7" y="9.7" width="1.700" height="1.700" fill="#e8eaee"/></svg><svg style="left:1020.7px;top:984.75px" width="6" height="3.5"><path d="M0 0H6L3 3.5Z" fill="#e8eaee"/></svg><svg style="left:1038.1px;top:979px" width="15" height="14" viewBox="0 0 15 14"><path d="M3 0.500V5.500M0.500 3H5.500" stroke="#fff" stroke-width="1.300"/><rect x="5.500" y="8.500" width="9" height="4.500" fill="#fff"/></svg><svg style="left:1061.8px;top:979px" width="13" height="14" viewBox="0 0 13 14"><path d="M1.500 0.500V12.500H12.500" fill="none" stroke="#e8eaee" stroke-width="1.300"/><rect x="1.500" y="9" width="3.500" height="3.500" fill="none" stroke="#e8eaee" stroke-width="0.900"/></svg><svg style="left:1082px;top:978.5px" width="15" height="15" viewBox="0 0 15 15"><circle cx="6.500" cy="8" r="5" fill="none" stroke="#e8eaee" stroke-width="1.300"/><path d="M6.500 8H14.500M6.500 8L11.500 1.500" stroke="#e8eaee" stroke-width="1.200"/></svg><svg style="left:1106.2px;top:984.75px" width="6" height="3.5"><path d="M0 0H6L3 3.5Z" fill="#e8eaee"/></svg><svg style="left:1121px;top:980px" width="15" height="12" viewBox="0 0 15 12"><path d="M13 0.500L1 11.500H14.500" fill="none" stroke="#e8eaee" stroke-width="1.300"/><path d="M6 7.500Q8 9 8 11.500" fill="none" stroke="#e8eaee" stroke-width="1"/></svg><svg style="left:1144.2px;top:979px" width="14" height="14" viewBox="0 0 14 14"><rect x="3" y="3" width="10" height="10" fill="none" stroke="#fff" stroke-width="1.400"/><rect x="0.600" y="0.600" width="4" height="4" fill="#4b8fd6" stroke="#fff" stroke-width="1.100"/></svg><svg style="left:1166.2px;top:984.75px" width="6" height="3.5"><path d="M0 0H6L3 3.5Z" fill="#e8eaee"/></svg><svg style="left:1181.5px;top:979.5px" width="14" height="13" viewBox="0 0 14 13"><path d="M0 1.500H14M0 5H9M0 8.500H14M0 12H7" stroke="#e8eaee" stroke-width="1.800"/></svg><svg style="left:1205px;top:978.5px" width="15" height="15" viewBox="0 0 15 15"><rect x="5" y="5" width="9.500" height="9.500" fill="#6cc080" stroke="#b8e8c0" stroke-width="1"/><path d="M0.500 2.500H4.500M2.500 0.500V4.500" stroke="#e8eaee" stroke-width="1.200"/><path d="M3 3L6 6" stroke="#e8eaee" stroke-width="1"/></svg><svg style="left:1229.3px;top:978.5px" width="15" height="15" viewBox="0 0 15 15"><path d="M6 1L8 7.500L12.500 13.500L9.500 12.500L6 9L3 13.500L0.500 14L4.500 7.500Z" fill="#fff"/><circle cx="12" cy="3.500" r="1.800" fill="none" stroke="#fff" stroke-width="1.100"/></svg><svg style="left:1251.8px;top:978.5px" width="15" height="15" viewBox="0 0 15 15"><path d="M6 1L8 7.500L12.500 13.500L9.500 12.500L6 9L3 13.500L0.500 14L4.500 7.500Z" fill="#fff"/><path d="M11 1L12 3L14 3.300L12.500 4.700L13 6.500L11 5.500" fill="#fff"/></svg><svg style="left:1274.5px;top:978.5px" width="15" height="15" viewBox="0 0 15 15"><path d="M6 1L8 7.500L12.500 13.500L9.500 12.500L6 9L3 13.500L0.500 14L4.500 7.500Z" fill="#e8eaee"/></svg><span class="t" style="left:1297.2px;top:978px;font-size:12px;transform:scaleX(0.690);color:#f0f2f5;">1:1</span><svg style="left:1314.5px;top:984.75px" width="6" height="3.5"><path d="M0 0H6L3 3.5Z" fill="#e8eaee"/></svg><svg style="left:1329.8px;top:978.5px" width="15" height="15" viewBox="0 0 15 15"><circle cx="7.500" cy="7.500" r="4" fill="none" stroke="#e8eaee" stroke-width="2.600"/><path d="M7.500 0.500V3M7.500 12V14.500M0.500 7.500H3M12 7.500H14.500M2.500 2.500L4.300 4.300M10.700 10.700L12.500 12.500M2.500 12.500L4.300 10.700M10.700 4.300L12.500 2.500" stroke="#e8eaee" stroke-width="2"/></svg><svg style="left:1353.6px;top:984.75px" width="6" height="3.5"><path d="M0 0H6L3 3.5Z" fill="#e8eaee"/></svg><svg style="left:1368.1px;top:978.5px" width="15" height="15" viewBox="0 0 15 15"><path d="M7.500 0V15M0 7.500H15" stroke="#f0f2f5" stroke-width="1.700"/></svg><span class="t" style="left:1390.2px;top:978px;font-size:12px;transform:scaleX(0.898);color:#f0f2f5;">Standard</span><svg style="left:1438.3px;top:984.75px" width="6" height="3.5"><path d="M0 0H6L3 3.5Z" fill="#e8eaee"/></svg><svg style="left:1454px;top:978.5px" width="15" height="15" viewBox="0 0 15 15"><path d="M7.500 1L14 4.500L7.500 8L1 4.500Z" fill="#58b0f4"/><path d="M1 7.500L7.500 11L14 7.500M1 10.500L7.500 14L14 10.500" fill="none" stroke="#e8eaee" stroke-width="1.200"/></svg><span class="t" style="left:1477.6px;top:978px;font-size:12px;transform:scaleX(0.939);color:#f0f2f5;">1400.000</span><svg style="left:1534.5px;top:978.5px" width="16" height="15" viewBox="0 0 16 15"><path d="M1 5L5 2.500H11L8 5ZM1 5V10L3 9V12H7V9L8 10V5M11 2.500V7" fill="none" stroke="#e8eaee" stroke-width="1.100"/><path d="M13 6V14M11 12L13 14.500L15 12" fill="none" stroke="#e8b64a" stroke-width="1.100"/></svg><span class="t" style="left:1558.1px;top:978px;font-size:12px;transform:scaleX(0.972);color:#f0f2f5;">+0.000</span><svg style="left:1602.5px;top:978.5px" width="16" height="15" viewBox="0 0 16 15"><rect x="1" y="1" width="5.500" height="5.500" fill="none" stroke="#e8eaee" stroke-width="1.200"/><circle cx="12" cy="5.500" r="2.800" fill="none" stroke="#e8eaee" stroke-width="1.200"/><path d="M6.500 9L9.500 14H3.500Z" fill="none" stroke="#e8eaee" stroke-width="1.200"/></svg><svg style="left:1630.5px;top:978.5px" width="15" height="15" viewBox="0 0 15 15"><path d="M1 4.500L4 1.500H14V11L11 14H1Z" fill="none" stroke="#e8f0fa" stroke-width="1.200"/><path d="M3 6.500H9V12H3Z" fill="none" stroke="#e8f0fa" stroke-width="0.800"/><path d="M3 12L9 6.500M3 9L6 6.500M6 12L9 9.500" stroke="#e8f0fa" stroke-width="0.700"/></svg><svg style="left:1655.5px;top:979px" width="16" height="14" viewBox="0 0 16 14"><path d="M4.500 3.500H15L11.500 7.500H1Z" fill="#e8f0fa"/><path d="M1 10.500H11.500L15 6.500" fill="none" stroke="#e8f0fa" stroke-width="1.200"/><path d="M9 2L5.500 8H8L6.500 13L11 6H8.500Z" fill="#4b8fd6" stroke="#fff" stroke-width="0.600"/></svg><svg style="left:1679.5px;top:978px" width="16" height="16" viewBox="0 0 16 16"><path d="M3 2V13M0.500 9.500H9" stroke="#e8eaee" stroke-width="1.200"/><rect x="4.500" y="1" width="5" height="3.500" fill="#4a90e0"/><path d="M1 12H8L11 8H4Z" fill="#e8b64a"/><path d="M9.500 12.500L11.500 14.500L15 10.500" fill="none" stroke="#50c060" stroke-width="1.600"/></svg><svg style="left:1705.5px;top:978.5px" width="17" height="15" viewBox="0 0 17 15"><rect x="0.500" y="1" width="14" height="11" fill="#c8ccd4"/><path d="M1 11L5 5L8 8.500L10.500 6L14 11Z" fill="#5a6270"/><path d="M12 6L16.500 14.500H7.500Z" fill="#f09030"/></svg><svg style="left:1733px;top:980px" width="15" height="12" viewBox="0 0 15 12"><rect x="0.600" y="0.600" width="13.800" height="10.800" fill="none" stroke="#e8eaee" stroke-width="1.200"/><path d="M3 6V3H6M12 6V9H9" fill="none" stroke="#e8eaee" stroke-width="1.200"/><path d="M3 3L6 6M12 9L9 6" stroke="#e8eaee" stroke-width="1"/></svg><svg style="left:1758.5px;top:979.5px" width="15" height="13" viewBox="0 0 15 13"><path d="M0 1.500H15M0 6.500H15M0 11.500H15" stroke="#e8eaee" stroke-width="1.800"/></svg></body></html>
